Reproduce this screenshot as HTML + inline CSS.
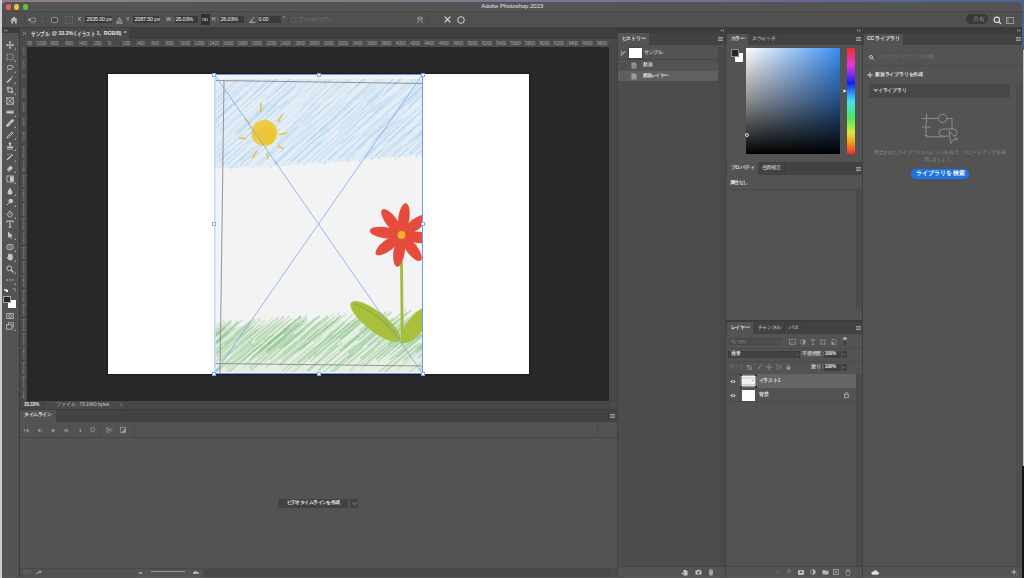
<!DOCTYPE html>
<html><head><meta charset="utf-8">
<style>
*{margin:0;padding:0;box-sizing:border-box}
html,body{width:1024px;height:578px;overflow:hidden;background:#535353;font-family:"Liberation Sans",sans-serif;color:#ddd}
.a{position:absolute}
.t{position:absolute;white-space:nowrap;line-height:1}
</style></head><body>
<!-- desktop strips -->
<div class="a" style="left:0;top:0;width:1024px;height:3px;background:linear-gradient(90deg,#8e7d88 0%,#8a7b8a 30%,#7b7592 58%,#646b96 78%,#4f6290 100%)"></div>
<div class="a" style="left:0;top:0;width:2px;height:578px;background:#cfcfcf"></div>
<div class="a" style="left:1022px;top:0;width:2px;height:50px;background:#4f6088"></div><div class="a" style="left:1022.5px;top:50px;width:1.5px;height:416px;background:#c4c4c4"></div><div class="a" style="left:1022px;top:50px;width:0.6px;height:416px;background:#4f4f4f"></div>
<!-- window -->
<div id="win" class="a" style="left:2px;top:2px;width:1020px;height:576px;background:#535353;border-radius:5px 5px 0 0;overflow:hidden">
</div>
<!-- title bar -->
<div class="a" style="left:2px;top:2px;width:1020px;height:9.5px;background:#545454;border-radius:5px 5px 0 0"></div>
<div class="a" style="left:5.5px;top:4.3px;width:5.5px;height:5.5px;border-radius:50%;background:#ec5f57"></div>
<div class="a" style="left:13.9px;top:4.3px;width:5.5px;height:5.5px;border-radius:50%;background:#f4bd3a"></div>
<div class="a" style="left:22.8px;top:4.3px;width:5.5px;height:5.5px;border-radius:50%;background:#5fc53f"></div>
<div class="t" style="left:481.2px;top:4.2px;font-size:5.95px;color:#e4e4e4">Adobe Photoshop 2023</div>
<!-- options bar -->
<div class="a" style="left:2px;top:11px;width:1020px;height:16px;background:#505050;border-top:1px solid #464646"></div>

<!-- options content -->
<div class="a" style="left:4px;top:14px;width:1px;height:11px;background:#474747"></div>
<svg class="a" style="left:10px;top:16px" width="8" height="8" viewBox="0 0 8 8"><path d="M4 0.5L0.3 4H1.3V7.5H3.1V5.3H4.9V7.5H6.7V4H7.7Z" fill="#b8b8b8"/></svg>
<div class="a" style="left:24px;top:14px;width:1px;height:11px;background:#474747"></div>
<svg class="a" style="left:27.5px;top:16.5px" width="8" height="7" viewBox="0 0 8 7"><path d="M2.5 1H7.5V4.5H2.5" fill="none" stroke="#a0a0a0" stroke-width="0.7"/><path d="M0.5 1.2L3.5 2.7L0.5 4.2Z" fill="#c0c0c0"/><path d="M1.5 6H7.5" stroke="#888" stroke-width="0.6"/></svg>
<div class="t" style="left:39.5px;top:17px;font-size:6px;color:#777">&#8964;</div>
<div class="a" style="left:45px;top:14px;width:1px;height:11px;background:#474747"></div>
<div class="a" style="left:51px;top:16.5px;width:6.5px;height:6.5px;background:#444;border:0.8px solid #8a8a8a;border-radius:1px"></div>
<div class="a" style="left:64.5px;top:16px;width:8px;height:8px;border:0.8px dotted #6a6a6a"></div>
<div class="t" style="left:77.5px;top:17.2px;font-size:5.5px;color:#c8c8c8">X :</div>
<div class="a" style="left:85px;top:16.3px;width:27px;height:6.6px;background:#3a3a3a"></div>
<div class="t" style="left:86.5px;top:17.2px;font-size:5.5px;color:#f0f0f0;font-weight:normal;letter-spacing:-0.2px">2935.00 px</div>
<svg class="a" style="left:115.5px;top:16.5px" width="7" height="7" viewBox="0 0 7 7"><path d="M3.5 0.8L6.3 6.2H0.7Z" fill="none" stroke="#bbb" stroke-width="0.8"/><circle cx="3.5" cy="4.4" r="0.7" fill="#bbb"/></svg>
<div class="t" style="left:126px;top:17.2px;font-size:5.5px;color:#c8c8c8">Y :</div>
<div class="a" style="left:133.4px;top:16.3px;width:26px;height:6.6px;background:#3a3a3a"></div>
<div class="t" style="left:134.5px;top:17.2px;font-size:5.5px;color:#f0f0f0;font-weight:normal;letter-spacing:-0.2px">2087.50 px</div>
<div class="t" style="left:166px;top:17.2px;font-size:5.5px;color:#c8c8c8">W :</div>
<div class="a" style="left:174.7px;top:16.3px;width:23px;height:6.6px;background:#3a3a3a"></div>
<div class="t" style="left:175.5px;top:17.2px;font-size:5.5px;color:#f0f0f0;font-weight:normal;letter-spacing:-0.2px">26.03%</div>
<div class="a" style="left:200.5px;top:13.9px;width:9px;height:11px;background:#313131"></div>
<svg class="a" style="left:202px;top:17.8px" width="6" height="3.5" viewBox="0 0 6 3.5"><rect x="0.4" y="0.4" width="2.6" height="2.7" rx="1.2" fill="none" stroke="#c8c8c8" stroke-width="0.75"/><rect x="3" y="0.4" width="2.6" height="2.7" rx="1.2" fill="none" stroke="#c8c8c8" stroke-width="0.75"/></svg>
<div class="t" style="left:211.5px;top:17.2px;font-size:5.5px;color:#c8c8c8">H :</div>
<div class="a" style="left:219.7px;top:16.3px;width:24px;height:6.6px;background:#3a3a3a"></div>
<div class="t" style="left:220.5px;top:17.2px;font-size:5.5px;color:#f0f0f0;font-weight:normal;letter-spacing:-0.2px">26.03%</div>
<div class="a" style="left:246px;top:14px;width:1px;height:11px;background:#474747"></div>
<svg class="a" style="left:248.5px;top:16.3px" width="7" height="7" viewBox="0 0 7 7"><path d="M0.5 6.3H6.5M0.5 6.3L5.5 1" stroke="#bbb" stroke-width="0.8" fill="none"/><path d="M3 6.3A2.6 2.6 0 0 0 2.3 4.4" stroke="#bbb" stroke-width="0.7" fill="none"/></svg>
<div class="a" style="left:257.5px;top:16.3px;width:23.5px;height:6.6px;background:#3a3a3a"></div>
<div class="t" style="left:258.5px;top:17.2px;font-size:5.5px;color:#f0f0f0;font-weight:normal;letter-spacing:-0.2px">0.00</div>
<div class="t" style="left:283px;top:16.2px;font-size:5px;color:#ccc">&#176;</div>
<div class="a" style="left:287.5px;top:14px;width:1px;height:11px;background:#474747"></div>
<div class="a" style="left:290.5px;top:17px;width:5px;height:5px;border:0.7px solid #5c5c5c;background:#4a4a4a"></div>
<div class="t" style="left:298.6px;top:17px;font-size:5.2px;color:#7b7b7b;letter-spacing:-0.9px">アンチエイリアス</div>
<svg class="a" style="left:415.5px;top:15.8px" width="8" height="8" viewBox="0 0 8 8"><path d="M1.5 1.2Q4 0 6.5 1.2V4Q4 5.2 1.5 4Z" fill="#999"/><path d="M2.5 2H5.5M2.5 3.2H5.5M4 1V4.6" stroke="#4a4a4a" stroke-width="0.5"/><path d="M1 7.2L3 5.2M7 7.2L5 5.2" stroke="#bbb" stroke-width="0.8"/></svg>
<div class="a" style="left:426.5px;top:14px;width:1px;height:11px;background:#474747"></div>
<svg class="a" style="left:443.8px;top:16.2px" width="7" height="7" viewBox="0 0 7 7"><path d="M0.7 0.7L6.3 6.3M6.3 0.7L0.7 6.3" stroke="#e2e2e2" stroke-width="1.1"/></svg>
<svg class="a" style="left:456.5px;top:15.6px" width="8" height="8" viewBox="0 0 8 8"><circle cx="4" cy="4" r="3.3" stroke="#e2e2e2" stroke-width="0.9" fill="none"/></svg>
<div class="a" style="left:966.3px;top:14.2px;width:22px;height:10.3px;background:#3a3a3a;border-radius:5.2px"></div>
<div class="t" style="left:973px;top:16.8px;font-size:5.5px;color:#8a8a8a">共有</div>
<svg class="a" style="left:992.5px;top:15.5px" width="9" height="9" viewBox="0 0 9 9"><circle cx="3.8" cy="3.8" r="2.7" stroke="#ddd" stroke-width="1.1" fill="none"/><path d="M5.8 5.8L8 8" stroke="#ddd" stroke-width="1.2"/></svg>
<svg class="a" style="left:1005.5px;top:16.5px" width="8" height="7" viewBox="0 0 8 7"><rect x="0.5" y="0.5" width="7" height="6" stroke="#aaa" stroke-width="0.8" fill="none"/><path d="M2 0.5V6.5" stroke="#aaa" stroke-width="0.6"/></svg>
<div class="t" style="left:1016.5px;top:17px;font-size:5px;color:#666">&#8964;</div>
<!-- doc tab bar -->
<div class="a" style="left:20px;top:27px;width:597px;height:12px;background:#3e3e3e"></div>
<div class="a" style="left:20px;top:28px;width:109px;height:11px;background:#4a4a4a"></div>

<svg class="a" style="left:22.3px;top:31px" width="5" height="5" viewBox="0 0 5 5"><path d="M0.8 0.8L4.2 4.2M4.2 0.8L0.8 4.2" stroke="#a0a0a0" stroke-width="0.75"/></svg>
<div class="a" style="left:6px;top:34.8px;width:8px;height:0.8px;border-top:0.8px dotted #444"></div>
<div class="t" style="left:30.7px;top:30.6px;font-size:6.4px;color:#e0e0e0;font-weight:bold;transform:scaleX(0.75);transform-origin:0 0">サンプル</div>
<div class="t" style="left:51.8px;top:31.4px;font-size:5.6px;color:#e0e0e0;font-weight:bold">@</div>
<div class="t" style="left:58.4px;top:31.4px;font-size:5.4px;color:#e0e0e0;font-weight:bold;letter-spacing:-0.1px">33.3%</div>
<div class="t" style="left:74.3px;top:31.2px;font-size:5.6px;color:#e0e0e0;font-weight:bold">(</div>
<div class="t" style="left:76.6px;top:30.6px;font-size:6.4px;color:#e0e0e0;font-weight:bold;transform:scaleX(0.75);transform-origin:0 0">イラスト</div>
<div class="t" style="left:96.4px;top:31.4px;font-size:5.4px;color:#e0e0e0;font-weight:bold">1,</div>
<div class="t" style="left:103.8px;top:31.4px;font-size:5.4px;color:#e0e0e0;font-weight:bold;letter-spacing:-0.15px">RGB/8)</div>
<div class="t" style="left:124px;top:31.2px;font-size:5.4px;color:#e0e0e0;font-weight:bold">*</div>
<!-- tools panel -->
<div class="a" style="left:2px;top:27px;width:18px;height:551px;background:#535353;border-right:1px solid #3a3a3a"></div>
<div class="a" style="left:2px;top:27px;width:17px;height:6px;background:#3c3c3c"></div>
<svg class="a" style="left:6px;top:41.3px" width="8" height="8" viewBox="0 0 8 8"><path d="M4 0.5V7.5M0.5 4H7.5" stroke="#c6c6c6" stroke-width="1"/><path d="M4 0L2.6 1.6H5.4ZM4 8L2.6 6.4H5.4ZM0 4L1.6 2.6V5.4ZM8 4L6.4 2.6V5.4Z" fill="#c6c6c6"/></svg>
<svg class="a" style="left:6px;top:52.7px" width="8" height="8" viewBox="0 0 8 8"><rect x="1" y="1.2" width="6" height="5.6" fill="none" stroke="#c6c6c6" stroke-width="0.8" stroke-dasharray="1.2 0.9"/></svg>
<svg class="a" style="left:6px;top:64.0px" width="8" height="8" viewBox="0 0 8 8"><path d="M1 3Q2 1 4.5 1.5Q7.5 1.5 7 3.5Q6 6 3 5.5Q1.5 5.2 1.5 3.5" fill="none" stroke="#c6c6c6" stroke-width="0.9"/><path d="M2 5.5L1.5 7.5" stroke="#c6c6c6" stroke-width="0.8"/></svg>
<svg class="a" style="left:6px;top:74.5px" width="8" height="8" viewBox="0 0 8 8"><path d="M1 7.5L5.5 3" stroke="#c6c6c6" stroke-width="1.6"/><path d="M6 0.5V2M7.5 2H6.5M5 1L5.6 1.6" stroke="#c6c6c6" stroke-width="0.6"/></svg>
<svg class="a" style="left:6px;top:85.7px" width="8" height="8" viewBox="0 0 8 8"><path d="M2 0.5V6H7.5M0.5 2H6V7.5" fill="none" stroke="#c6c6c6" stroke-width="1"/></svg>
<svg class="a" style="left:6px;top:96.7px" width="8" height="8" viewBox="0 0 8 8"><rect x="0.8" y="0.8" width="6.4" height="6.4" fill="none" stroke="#c6c6c6" stroke-width="0.9"/><path d="M0.8 0.8L7.2 7.2M7.2 0.8L0.8 7.2" stroke="#c6c6c6" stroke-width="0.7"/></svg>
<svg class="a" style="left:6px;top:108.0px" width="8" height="8" viewBox="0 0 8 8"><rect x="0.5" y="2.5" width="7" height="3" fill="#c6c6c6"/><path d="M1.8 2.5V3.7M3.3 2.5V3.7M4.8 2.5V3.7M6.3 2.5V3.7" stroke="#535353" stroke-width="0.5"/></svg>
<svg class="a" style="left:6px;top:119.0px" width="8" height="8" viewBox="0 0 8 8"><path d="M1.5 6.5L6.5 1.5" stroke="#c6c6c6" stroke-width="2.6" stroke-linecap="round"/><path d="M3 4L4 5M4 3L5 4" stroke="#535353" stroke-width="0.5"/></svg>
<svg class="a" style="left:6px;top:130.5px" width="8" height="8" viewBox="0 0 8 8"><path d="M1 7L1.5 5.5L6 1L7 2L2.5 6.5Z" fill="none" stroke="#c6c6c6" stroke-width="0.9"/></svg>
<svg class="a" style="left:6px;top:141.8px" width="8" height="8" viewBox="0 0 8 8"><circle cx="4" cy="1.6" r="1.3" fill="#c6c6c6"/><path d="M3.3 2.5H4.7V4.5H3.3Z" fill="#c6c6c6"/><rect x="1" y="4.5" width="6" height="1.6" fill="#c6c6c6"/><path d="M1 7.2H7" stroke="#c6c6c6" stroke-width="0.7"/></svg>
<svg class="a" style="left:6px;top:153.0px" width="8" height="8" viewBox="0 0 8 8"><path d="M1 7L5.5 2.5" stroke="#c6c6c6" stroke-width="1.3"/><path d="M5 1L7 3" stroke="#c6c6c6" stroke-width="1"/><path d="M1.2 1.2Q2.5 0.5 3 2" stroke="#c6c6c6" stroke-width="0.6" fill="none"/></svg>
<svg class="a" style="left:6px;top:164.0px" width="8" height="8" viewBox="0 0 8 8"><path d="M1 5L4.5 1.5L7 4L3.5 7.5H2Z" fill="#c6c6c6"/><path d="M1.5 4.5L4 7" stroke="#535353" stroke-width="0.6"/></svg>
<svg class="a" style="left:6px;top:175.4px" width="8" height="8" viewBox="0 0 8 8"><rect x="1" y="1" width="6.5" height="6" fill="none" stroke="#c6c6c6" stroke-width="0.8"/><rect x="4" y="1.5" width="3" height="5" fill="#c6c6c6"/></svg>
<svg class="a" style="left:6px;top:187.0px" width="8" height="8" viewBox="0 0 8 8"><path d="M4 0.8Q6.5 4 6.5 5.3A2.5 2.5 0 0 1 1.5 5.3Q1.5 4 4 0.8Z" fill="#c6c6c6"/></svg>
<svg class="a" style="left:6px;top:198.4px" width="8" height="8" viewBox="0 0 8 8"><circle cx="4.8" cy="3" r="2.3" fill="#c6c6c6"/><path d="M3.3 4.5L1 7" stroke="#c6c6c6" stroke-width="1"/></svg>
<svg class="a" style="left:6px;top:209.5px" width="8" height="8" viewBox="0 0 8 8"><path d="M4 0.8L6.8 4.2L4.8 7.2H3.2L1.2 4.2Z" fill="none" stroke="#c6c6c6" stroke-width="0.9"/><circle cx="4" cy="4" r="0.7" fill="#c6c6c6"/></svg>
<svg class="a" style="left:6px;top:220.4px" width="8" height="8" viewBox="0 0 8 8"><path d="M0.8 1H7.2V2.6M0.8 1V2.6M4 1V7.2M2.6 7.2H5.4" fill="none" stroke="#c6c6c6" stroke-width="1.1"/></svg>
<svg class="a" style="left:6px;top:231.3px" width="8" height="8" viewBox="0 0 8 8"><path d="M2 0.5V7L3.6 5.5L5 7.8L6 7.2L4.8 5H7Z" fill="#c6c6c6"/></svg>
<svg class="a" style="left:6px;top:242.6px" width="8" height="8" viewBox="0 0 8 8"><ellipse cx="4" cy="4" rx="3.3" ry="2.8" fill="none" stroke="#c6c6c6" stroke-width="0.9"/><ellipse cx="4" cy="4" rx="2.4" ry="2" fill="#7a7a7a"/></svg>
<svg class="a" style="left:6px;top:253.3px" width="8" height="8" viewBox="0 0 8 8"><path d="M2 3V1.5A0.6 0.6 0 0 1 3.2 1.5V0.9A0.6 0.6 0 0 1 4.4 0.9V1.3A0.6 0.6 0 0 1 5.6 1.5V2.3A0.6 0.6 0 0 1 6.8 2.5V5Q6.8 7.5 4.5 7.5Q2.8 7.5 1.5 5.5L0.8 4.2Q1 3.3 2 4Z" fill="#c6c6c6"/></svg>
<svg class="a" style="left:6px;top:264.8px" width="8" height="8" viewBox="0 0 8 8"><circle cx="3.3" cy="3.3" r="2.4" fill="none" stroke="#c6c6c6" stroke-width="1"/><path d="M5 5L7.5 7.5" stroke="#c6c6c6" stroke-width="1.3"/></svg>
<svg class="a" style="left:6px;top:276.3px" width="8" height="8" viewBox="0 0 8 8"><circle cx="1.3" cy="4" r="0.75" fill="#c6c6c6"/><circle cx="4" cy="4" r="0.75" fill="#c6c6c6"/><circle cx="6.7" cy="4" r="0.75" fill="#c6c6c6"/></svg>
<svg class="a" style="left:6px;top:311.7px" width="8" height="8" viewBox="0 0 8 8"><rect x="0.8" y="1.5" width="6.4" height="5" fill="none" stroke="#c6c6c6" stroke-width="0.8"/><circle cx="4" cy="4" r="1.5" fill="none" stroke="#c6c6c6" stroke-width="0.7"/></svg>
<svg class="a" style="left:6px;top:322.3px" width="8" height="8" viewBox="0 0 8 8"><rect x="2.5" y="0.8" width="5" height="4" fill="none" stroke="#c6c6c6" stroke-width="0.7"/><rect x="0.5" y="2.8" width="5.5" height="4.4" fill="#535353" stroke="#c6c6c6" stroke-width="0.8"/></svg>
<svg class="a" style="left:13.6px;top:48.3px" width="2" height="2" viewBox="0 0 2 2"><path d="M2 0V2H0Z" fill="#a0a0a0"/></svg>
<svg class="a" style="left:13.6px;top:59.7px" width="2" height="2" viewBox="0 0 2 2"><path d="M2 0V2H0Z" fill="#a0a0a0"/></svg>
<svg class="a" style="left:13.6px;top:71.0px" width="2" height="2" viewBox="0 0 2 2"><path d="M2 0V2H0Z" fill="#a0a0a0"/></svg>
<svg class="a" style="left:13.6px;top:81.5px" width="2" height="2" viewBox="0 0 2 2"><path d="M2 0V2H0Z" fill="#a0a0a0"/></svg>
<svg class="a" style="left:13.6px;top:92.7px" width="2" height="2" viewBox="0 0 2 2"><path d="M2 0V2H0Z" fill="#a0a0a0"/></svg>
<svg class="a" style="left:13.6px;top:115.0px" width="2" height="2" viewBox="0 0 2 2"><path d="M2 0V2H0Z" fill="#a0a0a0"/></svg>
<svg class="a" style="left:13.6px;top:126.0px" width="2" height="2" viewBox="0 0 2 2"><path d="M2 0V2H0Z" fill="#a0a0a0"/></svg>
<svg class="a" style="left:13.6px;top:137.5px" width="2" height="2" viewBox="0 0 2 2"><path d="M2 0V2H0Z" fill="#a0a0a0"/></svg>
<svg class="a" style="left:13.6px;top:148.8px" width="2" height="2" viewBox="0 0 2 2"><path d="M2 0V2H0Z" fill="#a0a0a0"/></svg>
<svg class="a" style="left:13.6px;top:160.0px" width="2" height="2" viewBox="0 0 2 2"><path d="M2 0V2H0Z" fill="#a0a0a0"/></svg>
<svg class="a" style="left:13.6px;top:171.0px" width="2" height="2" viewBox="0 0 2 2"><path d="M2 0V2H0Z" fill="#a0a0a0"/></svg>
<svg class="a" style="left:13.6px;top:182.4px" width="2" height="2" viewBox="0 0 2 2"><path d="M2 0V2H0Z" fill="#a0a0a0"/></svg>
<svg class="a" style="left:13.6px;top:194.0px" width="2" height="2" viewBox="0 0 2 2"><path d="M2 0V2H0Z" fill="#a0a0a0"/></svg>
<svg class="a" style="left:13.6px;top:205.4px" width="2" height="2" viewBox="0 0 2 2"><path d="M2 0V2H0Z" fill="#a0a0a0"/></svg>
<svg class="a" style="left:13.6px;top:216.5px" width="2" height="2" viewBox="0 0 2 2"><path d="M2 0V2H0Z" fill="#a0a0a0"/></svg>
<svg class="a" style="left:13.6px;top:238.3px" width="2" height="2" viewBox="0 0 2 2"><path d="M2 0V2H0Z" fill="#a0a0a0"/></svg>
<svg class="a" style="left:13.6px;top:249.6px" width="2" height="2" viewBox="0 0 2 2"><path d="M2 0V2H0Z" fill="#a0a0a0"/></svg>
<svg class="a" style="left:13.6px;top:260.3px" width="2" height="2" viewBox="0 0 2 2"><path d="M2 0V2H0Z" fill="#a0a0a0"/></svg>
<svg class="a" style="left:13.6px;top:271.8px" width="2" height="2" viewBox="0 0 2 2"><path d="M2 0V2H0Z" fill="#a0a0a0"/></svg>
<svg class="a" style="left:13.6px;top:283.3px" width="2" height="2" viewBox="0 0 2 2"><path d="M2 0V2H0Z" fill="#a0a0a0"/></svg>
<svg class="a" style="left:13.6px;top:329.3px" width="2" height="2" viewBox="0 0 2 2"><path d="M2 0V2H0Z" fill="#a0a0a0"/></svg>
<div class="a" style="left:4.2px;top:288.5px;width:2.6px;height:2.6px;background:#222;border:0.5px solid #ccc"></div><div class="a" style="left:5.5px;top:289.8px;width:2.6px;height:2.6px;background:#fff"></div>
<svg class="a" style="left:11.5px;top:288px" width="4" height="4" viewBox="0 0 4 4"><path d="M0.5 0.8H3.2V3.5" fill="none" stroke="#c6c6c6" stroke-width="0.6"/></svg>
<div class="a" style="left:7.9px;top:299.5px;width:8.2px;height:8px;background:#fff"></div>
<div class="a" style="left:3.3px;top:295.6px;width:8.2px;height:7.8px;background:#262626;border:0.8px solid #a8a8a8"></div>
<svg class="a" style="left:4px;top:28.8px" width="4" height="3" viewBox="0 0 4 3"><path d="M0.2 0.2L1.8 1.5L0.2 2.8ZM2.2 0.2L3.8 1.5L2.2 2.8Z" fill="#9a9a9a"/></svg>
<!-- rulers -->
<div class="a" style="left:20px;top:39px;width:597px;height:8px;background:#494949"></div>
<div class="a" style="left:20px;top:39px;width:7px;height:362px;background:#494949"></div>
<div class="a" style="left:21.4px;top:40px;width:0.6px;height:6.5px;background:#575757"></div>
<div class="a" style="left:28.6px;top:44.5px;width:0.6px;height:2px;background:#575757"></div>
<div class="a" style="left:32.2px;top:45.3px;width:0.6px;height:1.2px;background:#575757"></div>
<div class="t" style="left:22.4px;top:41.6px;font-size:4.6px;color:#a8a8a8;letter-spacing:-0.15px">1200</div>
<div class="a" style="left:35.8px;top:40px;width:0.6px;height:6.5px;background:#575757"></div>
<div class="a" style="left:39.3px;top:45.3px;width:0.6px;height:1.2px;background:#575757"></div>
<div class="a" style="left:42.9px;top:44.5px;width:0.6px;height:2px;background:#575757"></div>
<div class="a" style="left:46.5px;top:45.3px;width:0.6px;height:1.2px;background:#575757"></div>
<div class="t" style="left:36.8px;top:41.6px;font-size:4.6px;color:#a8a8a8;letter-spacing:-0.15px">1000</div>
<div class="a" style="left:50.1px;top:40px;width:0.6px;height:6.5px;background:#575757"></div>
<div class="a" style="left:53.7px;top:45.3px;width:0.6px;height:1.2px;background:#575757"></div>
<div class="a" style="left:57.3px;top:44.5px;width:0.6px;height:2px;background:#575757"></div>
<div class="a" style="left:60.9px;top:45.3px;width:0.6px;height:1.2px;background:#575757"></div>
<div class="t" style="left:51.1px;top:41.6px;font-size:4.6px;color:#a8a8a8;letter-spacing:-0.15px">800</div>
<div class="a" style="left:64.5px;top:40px;width:0.6px;height:6.5px;background:#575757"></div>
<div class="a" style="left:68.1px;top:45.3px;width:0.6px;height:1.2px;background:#575757"></div>
<div class="a" style="left:71.7px;top:44.5px;width:0.6px;height:2px;background:#575757"></div>
<div class="a" style="left:75.3px;top:45.3px;width:0.6px;height:1.2px;background:#575757"></div>
<div class="t" style="left:65.5px;top:41.6px;font-size:4.6px;color:#a8a8a8;letter-spacing:-0.15px">600</div>
<div class="a" style="left:78.9px;top:40px;width:0.6px;height:6.5px;background:#575757"></div>
<div class="a" style="left:82.5px;top:45.3px;width:0.6px;height:1.2px;background:#575757"></div>
<div class="a" style="left:86.0px;top:44.5px;width:0.6px;height:2px;background:#575757"></div>
<div class="a" style="left:89.6px;top:45.3px;width:0.6px;height:1.2px;background:#575757"></div>
<div class="t" style="left:79.9px;top:41.6px;font-size:4.6px;color:#a8a8a8;letter-spacing:-0.15px">400</div>
<div class="a" style="left:93.2px;top:40px;width:0.6px;height:6.5px;background:#575757"></div>
<div class="a" style="left:96.8px;top:45.3px;width:0.6px;height:1.2px;background:#575757"></div>
<div class="a" style="left:100.4px;top:44.5px;width:0.6px;height:2px;background:#575757"></div>
<div class="a" style="left:104.0px;top:45.3px;width:0.6px;height:1.2px;background:#575757"></div>
<div class="t" style="left:94.2px;top:41.6px;font-size:4.6px;color:#a8a8a8;letter-spacing:-0.15px">200</div>
<div class="a" style="left:107.6px;top:40px;width:0.6px;height:6.5px;background:#575757"></div>
<div class="a" style="left:111.2px;top:45.3px;width:0.6px;height:1.2px;background:#575757"></div>
<div class="a" style="left:114.8px;top:44.5px;width:0.6px;height:2px;background:#575757"></div>
<div class="a" style="left:118.4px;top:45.3px;width:0.6px;height:1.2px;background:#575757"></div>
<div class="t" style="left:108.6px;top:41.6px;font-size:4.6px;color:#a8a8a8;letter-spacing:-0.15px">0</div>
<div class="a" style="left:122.0px;top:40px;width:0.6px;height:6.5px;background:#575757"></div>
<div class="a" style="left:125.6px;top:45.3px;width:0.6px;height:1.2px;background:#575757"></div>
<div class="a" style="left:129.2px;top:44.5px;width:0.6px;height:2px;background:#575757"></div>
<div class="a" style="left:132.7px;top:45.3px;width:0.6px;height:1.2px;background:#575757"></div>
<div class="t" style="left:123.0px;top:41.6px;font-size:4.6px;color:#a8a8a8;letter-spacing:-0.15px">200</div>
<div class="a" style="left:136.3px;top:40px;width:0.6px;height:6.5px;background:#575757"></div>
<div class="a" style="left:139.9px;top:45.3px;width:0.6px;height:1.2px;background:#575757"></div>
<div class="a" style="left:143.5px;top:44.5px;width:0.6px;height:2px;background:#575757"></div>
<div class="a" style="left:147.1px;top:45.3px;width:0.6px;height:1.2px;background:#575757"></div>
<div class="t" style="left:137.3px;top:41.6px;font-size:4.6px;color:#a8a8a8;letter-spacing:-0.15px">400</div>
<div class="a" style="left:150.7px;top:40px;width:0.6px;height:6.5px;background:#575757"></div>
<div class="a" style="left:154.3px;top:45.3px;width:0.6px;height:1.2px;background:#575757"></div>
<div class="a" style="left:157.9px;top:44.5px;width:0.6px;height:2px;background:#575757"></div>
<div class="a" style="left:161.5px;top:45.3px;width:0.6px;height:1.2px;background:#575757"></div>
<div class="t" style="left:151.7px;top:41.6px;font-size:4.6px;color:#a8a8a8;letter-spacing:-0.15px">600</div>
<div class="a" style="left:165.1px;top:40px;width:0.6px;height:6.5px;background:#575757"></div>
<div class="a" style="left:168.7px;top:45.3px;width:0.6px;height:1.2px;background:#575757"></div>
<div class="a" style="left:172.3px;top:44.5px;width:0.6px;height:2px;background:#575757"></div>
<div class="a" style="left:175.9px;top:45.3px;width:0.6px;height:1.2px;background:#575757"></div>
<div class="t" style="left:166.1px;top:41.6px;font-size:4.6px;color:#a8a8a8;letter-spacing:-0.15px">800</div>
<div class="a" style="left:179.4px;top:40px;width:0.6px;height:6.5px;background:#575757"></div>
<div class="a" style="left:183.0px;top:45.3px;width:0.6px;height:1.2px;background:#575757"></div>
<div class="a" style="left:186.6px;top:44.5px;width:0.6px;height:2px;background:#575757"></div>
<div class="a" style="left:190.2px;top:45.3px;width:0.6px;height:1.2px;background:#575757"></div>
<div class="t" style="left:180.4px;top:41.6px;font-size:4.6px;color:#a8a8a8;letter-spacing:-0.15px">1000</div>
<div class="a" style="left:193.8px;top:40px;width:0.6px;height:6.5px;background:#575757"></div>
<div class="a" style="left:197.4px;top:45.3px;width:0.6px;height:1.2px;background:#575757"></div>
<div class="a" style="left:201.0px;top:44.5px;width:0.6px;height:2px;background:#575757"></div>
<div class="a" style="left:204.6px;top:45.3px;width:0.6px;height:1.2px;background:#575757"></div>
<div class="t" style="left:194.8px;top:41.6px;font-size:4.6px;color:#a8a8a8;letter-spacing:-0.15px">1200</div>
<div class="a" style="left:208.2px;top:40px;width:0.6px;height:6.5px;background:#575757"></div>
<div class="a" style="left:211.8px;top:45.3px;width:0.6px;height:1.2px;background:#575757"></div>
<div class="a" style="left:215.4px;top:44.5px;width:0.6px;height:2px;background:#575757"></div>
<div class="a" style="left:219.0px;top:45.3px;width:0.6px;height:1.2px;background:#575757"></div>
<div class="t" style="left:209.2px;top:41.6px;font-size:4.6px;color:#a8a8a8;letter-spacing:-0.15px">1400</div>
<div class="a" style="left:222.6px;top:40px;width:0.6px;height:6.5px;background:#575757"></div>
<div class="a" style="left:226.2px;top:45.3px;width:0.6px;height:1.2px;background:#575757"></div>
<div class="a" style="left:229.7px;top:44.5px;width:0.6px;height:2px;background:#575757"></div>
<div class="a" style="left:233.3px;top:45.3px;width:0.6px;height:1.2px;background:#575757"></div>
<div class="t" style="left:223.6px;top:41.6px;font-size:4.6px;color:#a8a8a8;letter-spacing:-0.15px">1600</div>
<div class="a" style="left:236.9px;top:40px;width:0.6px;height:6.5px;background:#575757"></div>
<div class="a" style="left:240.5px;top:45.3px;width:0.6px;height:1.2px;background:#575757"></div>
<div class="a" style="left:244.1px;top:44.5px;width:0.6px;height:2px;background:#575757"></div>
<div class="a" style="left:247.7px;top:45.3px;width:0.6px;height:1.2px;background:#575757"></div>
<div class="t" style="left:237.9px;top:41.6px;font-size:4.6px;color:#a8a8a8;letter-spacing:-0.15px">1800</div>
<div class="a" style="left:251.3px;top:40px;width:0.6px;height:6.5px;background:#575757"></div>
<div class="a" style="left:254.9px;top:45.3px;width:0.6px;height:1.2px;background:#575757"></div>
<div class="a" style="left:258.5px;top:44.5px;width:0.6px;height:2px;background:#575757"></div>
<div class="a" style="left:262.1px;top:45.3px;width:0.6px;height:1.2px;background:#575757"></div>
<div class="t" style="left:252.3px;top:41.6px;font-size:4.6px;color:#a8a8a8;letter-spacing:-0.15px">2000</div>
<div class="a" style="left:265.7px;top:40px;width:0.6px;height:6.5px;background:#575757"></div>
<div class="a" style="left:269.3px;top:45.3px;width:0.6px;height:1.2px;background:#575757"></div>
<div class="a" style="left:272.9px;top:44.5px;width:0.6px;height:2px;background:#575757"></div>
<div class="a" style="left:276.4px;top:45.3px;width:0.6px;height:1.2px;background:#575757"></div>
<div class="t" style="left:266.7px;top:41.6px;font-size:4.6px;color:#a8a8a8;letter-spacing:-0.15px">2200</div>
<div class="a" style="left:280.0px;top:40px;width:0.6px;height:6.5px;background:#575757"></div>
<div class="a" style="left:283.6px;top:45.3px;width:0.6px;height:1.2px;background:#575757"></div>
<div class="a" style="left:287.2px;top:44.5px;width:0.6px;height:2px;background:#575757"></div>
<div class="a" style="left:290.8px;top:45.3px;width:0.6px;height:1.2px;background:#575757"></div>
<div class="t" style="left:281.0px;top:41.6px;font-size:4.6px;color:#a8a8a8;letter-spacing:-0.15px">2400</div>
<div class="a" style="left:294.4px;top:40px;width:0.6px;height:6.5px;background:#575757"></div>
<div class="a" style="left:298.0px;top:45.3px;width:0.6px;height:1.2px;background:#575757"></div>
<div class="a" style="left:301.6px;top:44.5px;width:0.6px;height:2px;background:#575757"></div>
<div class="a" style="left:305.2px;top:45.3px;width:0.6px;height:1.2px;background:#575757"></div>
<div class="t" style="left:295.4px;top:41.6px;font-size:4.6px;color:#a8a8a8;letter-spacing:-0.15px">2600</div>
<div class="a" style="left:308.8px;top:40px;width:0.6px;height:6.5px;background:#575757"></div>
<div class="a" style="left:312.4px;top:45.3px;width:0.6px;height:1.2px;background:#575757"></div>
<div class="a" style="left:316.0px;top:44.5px;width:0.6px;height:2px;background:#575757"></div>
<div class="a" style="left:319.6px;top:45.3px;width:0.6px;height:1.2px;background:#575757"></div>
<div class="t" style="left:309.8px;top:41.6px;font-size:4.6px;color:#a8a8a8;letter-spacing:-0.15px">2800</div>
<div class="a" style="left:323.1px;top:40px;width:0.6px;height:6.5px;background:#575757"></div>
<div class="a" style="left:326.7px;top:45.3px;width:0.6px;height:1.2px;background:#575757"></div>
<div class="a" style="left:330.3px;top:44.5px;width:0.6px;height:2px;background:#575757"></div>
<div class="a" style="left:333.9px;top:45.3px;width:0.6px;height:1.2px;background:#575757"></div>
<div class="t" style="left:324.1px;top:41.6px;font-size:4.6px;color:#a8a8a8;letter-spacing:-0.15px">3000</div>
<div class="a" style="left:337.5px;top:40px;width:0.6px;height:6.5px;background:#575757"></div>
<div class="a" style="left:341.1px;top:45.3px;width:0.6px;height:1.2px;background:#575757"></div>
<div class="a" style="left:344.7px;top:44.5px;width:0.6px;height:2px;background:#575757"></div>
<div class="a" style="left:348.3px;top:45.3px;width:0.6px;height:1.2px;background:#575757"></div>
<div class="t" style="left:338.5px;top:41.6px;font-size:4.6px;color:#a8a8a8;letter-spacing:-0.15px">3200</div>
<div class="a" style="left:351.9px;top:40px;width:0.6px;height:6.5px;background:#575757"></div>
<div class="a" style="left:355.5px;top:45.3px;width:0.6px;height:1.2px;background:#575757"></div>
<div class="a" style="left:359.1px;top:44.5px;width:0.6px;height:2px;background:#575757"></div>
<div class="a" style="left:362.7px;top:45.3px;width:0.6px;height:1.2px;background:#575757"></div>
<div class="t" style="left:352.9px;top:41.6px;font-size:4.6px;color:#a8a8a8;letter-spacing:-0.15px">3400</div>
<div class="a" style="left:366.3px;top:40px;width:0.6px;height:6.5px;background:#575757"></div>
<div class="a" style="left:369.9px;top:45.3px;width:0.6px;height:1.2px;background:#575757"></div>
<div class="a" style="left:373.4px;top:44.5px;width:0.6px;height:2px;background:#575757"></div>
<div class="a" style="left:377.0px;top:45.3px;width:0.6px;height:1.2px;background:#575757"></div>
<div class="t" style="left:367.3px;top:41.6px;font-size:4.6px;color:#a8a8a8;letter-spacing:-0.15px">3600</div>
<div class="a" style="left:380.6px;top:40px;width:0.6px;height:6.5px;background:#575757"></div>
<div class="a" style="left:384.2px;top:45.3px;width:0.6px;height:1.2px;background:#575757"></div>
<div class="a" style="left:387.8px;top:44.5px;width:0.6px;height:2px;background:#575757"></div>
<div class="a" style="left:391.4px;top:45.3px;width:0.6px;height:1.2px;background:#575757"></div>
<div class="t" style="left:381.6px;top:41.6px;font-size:4.6px;color:#a8a8a8;letter-spacing:-0.15px">3800</div>
<div class="a" style="left:395.0px;top:40px;width:0.6px;height:6.5px;background:#575757"></div>
<div class="a" style="left:398.6px;top:45.3px;width:0.6px;height:1.2px;background:#575757"></div>
<div class="a" style="left:402.2px;top:44.5px;width:0.6px;height:2px;background:#575757"></div>
<div class="a" style="left:405.8px;top:45.3px;width:0.6px;height:1.2px;background:#575757"></div>
<div class="t" style="left:396.0px;top:41.6px;font-size:4.6px;color:#a8a8a8;letter-spacing:-0.15px">4000</div>
<div class="a" style="left:409.4px;top:40px;width:0.6px;height:6.5px;background:#575757"></div>
<div class="a" style="left:413.0px;top:45.3px;width:0.6px;height:1.2px;background:#575757"></div>
<div class="a" style="left:416.6px;top:44.5px;width:0.6px;height:2px;background:#575757"></div>
<div class="a" style="left:420.1px;top:45.3px;width:0.6px;height:1.2px;background:#575757"></div>
<div class="t" style="left:410.4px;top:41.6px;font-size:4.6px;color:#a8a8a8;letter-spacing:-0.15px">4200</div>
<div class="a" style="left:423.7px;top:40px;width:0.6px;height:6.5px;background:#575757"></div>
<div class="a" style="left:427.3px;top:45.3px;width:0.6px;height:1.2px;background:#575757"></div>
<div class="a" style="left:430.9px;top:44.5px;width:0.6px;height:2px;background:#575757"></div>
<div class="a" style="left:434.5px;top:45.3px;width:0.6px;height:1.2px;background:#575757"></div>
<div class="t" style="left:424.7px;top:41.6px;font-size:4.6px;color:#a8a8a8;letter-spacing:-0.15px">4400</div>
<div class="a" style="left:438.1px;top:40px;width:0.6px;height:6.5px;background:#575757"></div>
<div class="a" style="left:441.7px;top:45.3px;width:0.6px;height:1.2px;background:#575757"></div>
<div class="a" style="left:445.3px;top:44.5px;width:0.6px;height:2px;background:#575757"></div>
<div class="a" style="left:448.9px;top:45.3px;width:0.6px;height:1.2px;background:#575757"></div>
<div class="t" style="left:439.1px;top:41.6px;font-size:4.6px;color:#a8a8a8;letter-spacing:-0.15px">4600</div>
<div class="a" style="left:452.5px;top:40px;width:0.6px;height:6.5px;background:#575757"></div>
<div class="a" style="left:456.1px;top:45.3px;width:0.6px;height:1.2px;background:#575757"></div>
<div class="a" style="left:459.7px;top:44.5px;width:0.6px;height:2px;background:#575757"></div>
<div class="a" style="left:463.3px;top:45.3px;width:0.6px;height:1.2px;background:#575757"></div>
<div class="t" style="left:453.5px;top:41.6px;font-size:4.6px;color:#a8a8a8;letter-spacing:-0.15px">4800</div>
<div class="a" style="left:466.9px;top:40px;width:0.6px;height:6.5px;background:#575757"></div>
<div class="a" style="left:470.4px;top:45.3px;width:0.6px;height:1.2px;background:#575757"></div>
<div class="a" style="left:474.0px;top:44.5px;width:0.6px;height:2px;background:#575757"></div>
<div class="a" style="left:477.6px;top:45.3px;width:0.6px;height:1.2px;background:#575757"></div>
<div class="t" style="left:467.9px;top:41.6px;font-size:4.6px;color:#a8a8a8;letter-spacing:-0.15px">5000</div>
<div class="a" style="left:481.2px;top:40px;width:0.6px;height:6.5px;background:#575757"></div>
<div class="a" style="left:484.8px;top:45.3px;width:0.6px;height:1.2px;background:#575757"></div>
<div class="a" style="left:488.4px;top:44.5px;width:0.6px;height:2px;background:#575757"></div>
<div class="a" style="left:492.0px;top:45.3px;width:0.6px;height:1.2px;background:#575757"></div>
<div class="t" style="left:482.2px;top:41.6px;font-size:4.6px;color:#a8a8a8;letter-spacing:-0.15px">5200</div>
<div class="a" style="left:495.6px;top:40px;width:0.6px;height:6.5px;background:#575757"></div>
<div class="a" style="left:499.2px;top:45.3px;width:0.6px;height:1.2px;background:#575757"></div>
<div class="a" style="left:502.8px;top:44.5px;width:0.6px;height:2px;background:#575757"></div>
<div class="a" style="left:506.4px;top:45.3px;width:0.6px;height:1.2px;background:#575757"></div>
<div class="t" style="left:496.6px;top:41.6px;font-size:4.6px;color:#a8a8a8;letter-spacing:-0.15px">5400</div>
<div class="a" style="left:510.0px;top:40px;width:0.6px;height:6.5px;background:#575757"></div>
<div class="a" style="left:513.6px;top:45.3px;width:0.6px;height:1.2px;background:#575757"></div>
<div class="a" style="left:517.1px;top:44.5px;width:0.6px;height:2px;background:#575757"></div>
<div class="a" style="left:520.7px;top:45.3px;width:0.6px;height:1.2px;background:#575757"></div>
<div class="t" style="left:511.0px;top:41.6px;font-size:4.6px;color:#a8a8a8;letter-spacing:-0.15px">5600</div>
<div class="a" style="left:524.3px;top:40px;width:0.6px;height:6.5px;background:#575757"></div>
<div class="a" style="left:527.9px;top:45.3px;width:0.6px;height:1.2px;background:#575757"></div>
<div class="a" style="left:531.5px;top:44.5px;width:0.6px;height:2px;background:#575757"></div>
<div class="a" style="left:535.1px;top:45.3px;width:0.6px;height:1.2px;background:#575757"></div>
<div class="t" style="left:525.3px;top:41.6px;font-size:4.6px;color:#a8a8a8;letter-spacing:-0.15px">5800</div>
<div class="a" style="left:538.7px;top:40px;width:0.6px;height:6.5px;background:#575757"></div>
<div class="a" style="left:542.3px;top:45.3px;width:0.6px;height:1.2px;background:#575757"></div>
<div class="a" style="left:545.9px;top:44.5px;width:0.6px;height:2px;background:#575757"></div>
<div class="a" style="left:549.5px;top:45.3px;width:0.6px;height:1.2px;background:#575757"></div>
<div class="t" style="left:539.7px;top:41.6px;font-size:4.6px;color:#a8a8a8;letter-spacing:-0.15px">6000</div>
<div class="a" style="left:553.1px;top:40px;width:0.6px;height:6.5px;background:#575757"></div>
<div class="a" style="left:556.7px;top:45.3px;width:0.6px;height:1.2px;background:#575757"></div>
<div class="a" style="left:560.3px;top:44.5px;width:0.6px;height:2px;background:#575757"></div>
<div class="a" style="left:563.8px;top:45.3px;width:0.6px;height:1.2px;background:#575757"></div>
<div class="t" style="left:554.1px;top:41.6px;font-size:4.6px;color:#a8a8a8;letter-spacing:-0.15px">6200</div>
<div class="a" style="left:567.4px;top:40px;width:0.6px;height:6.5px;background:#575757"></div>
<div class="a" style="left:571.0px;top:45.3px;width:0.6px;height:1.2px;background:#575757"></div>
<div class="a" style="left:574.6px;top:44.5px;width:0.6px;height:2px;background:#575757"></div>
<div class="a" style="left:578.2px;top:45.3px;width:0.6px;height:1.2px;background:#575757"></div>
<div class="t" style="left:568.4px;top:41.6px;font-size:4.6px;color:#a8a8a8;letter-spacing:-0.15px">6400</div>
<div class="a" style="left:581.8px;top:40px;width:0.6px;height:6.5px;background:#575757"></div>
<div class="a" style="left:585.4px;top:45.3px;width:0.6px;height:1.2px;background:#575757"></div>
<div class="a" style="left:589.0px;top:44.5px;width:0.6px;height:2px;background:#575757"></div>
<div class="a" style="left:592.6px;top:45.3px;width:0.6px;height:1.2px;background:#575757"></div>
<div class="t" style="left:582.8px;top:41.6px;font-size:4.6px;color:#a8a8a8;letter-spacing:-0.15px">6600</div>
<div class="a" style="left:596.2px;top:40px;width:0.6px;height:6.5px;background:#575757"></div>
<div class="a" style="left:599.8px;top:45.3px;width:0.6px;height:1.2px;background:#575757"></div>
<div class="a" style="left:603.4px;top:44.5px;width:0.6px;height:2px;background:#575757"></div>
<div class="a" style="left:607.0px;top:45.3px;width:0.6px;height:1.2px;background:#575757"></div>
<div class="t" style="left:597.2px;top:41.6px;font-size:4.6px;color:#a8a8a8;letter-spacing:-0.15px">6800</div>
<div class="t" style="left:22.6px;top:46.8px;font-size:3.7px;color:#9c9c9c">4</div>
<div class="t" style="left:22.6px;top:49.7px;font-size:3.7px;color:#9c9c9c">0</div>
<div class="t" style="left:22.6px;top:52.6px;font-size:3.7px;color:#9c9c9c">0</div>
<div class="a" style="left:20.5px;top:59.8px;width:6.5px;height:0.6px;background:#575757"></div>
<div class="t" style="left:22.6px;top:61.1px;font-size:3.7px;color:#9c9c9c">2</div>
<div class="t" style="left:22.6px;top:64.0px;font-size:3.7px;color:#9c9c9c">0</div>
<div class="t" style="left:22.6px;top:66.9px;font-size:3.7px;color:#9c9c9c">0</div>
<div class="a" style="left:20.5px;top:74.2px;width:6.5px;height:0.6px;background:#575757"></div>
<div class="t" style="left:22.6px;top:75.5px;font-size:3.7px;color:#9c9c9c">0</div>
<div class="a" style="left:20.5px;top:88.6px;width:6.5px;height:0.6px;background:#575757"></div>
<div class="t" style="left:22.6px;top:89.9px;font-size:3.7px;color:#9c9c9c">2</div>
<div class="t" style="left:22.6px;top:92.8px;font-size:3.7px;color:#9c9c9c">0</div>
<div class="t" style="left:22.6px;top:95.7px;font-size:3.7px;color:#9c9c9c">0</div>
<div class="a" style="left:20.5px;top:102.9px;width:6.5px;height:0.6px;background:#575757"></div>
<div class="t" style="left:22.6px;top:104.2px;font-size:3.7px;color:#9c9c9c">4</div>
<div class="t" style="left:22.6px;top:107.1px;font-size:3.7px;color:#9c9c9c">0</div>
<div class="t" style="left:22.6px;top:110.0px;font-size:3.7px;color:#9c9c9c">0</div>
<div class="a" style="left:20.5px;top:117.3px;width:6.5px;height:0.6px;background:#575757"></div>
<div class="t" style="left:22.6px;top:118.6px;font-size:3.7px;color:#9c9c9c">6</div>
<div class="t" style="left:22.6px;top:121.5px;font-size:3.7px;color:#9c9c9c">0</div>
<div class="t" style="left:22.6px;top:124.4px;font-size:3.7px;color:#9c9c9c">0</div>
<div class="a" style="left:20.5px;top:131.7px;width:6.5px;height:0.6px;background:#575757"></div>
<div class="t" style="left:22.6px;top:133.0px;font-size:3.7px;color:#9c9c9c">8</div>
<div class="t" style="left:22.6px;top:135.9px;font-size:3.7px;color:#9c9c9c">0</div>
<div class="t" style="left:22.6px;top:138.8px;font-size:3.7px;color:#9c9c9c">0</div>
<div class="a" style="left:20.5px;top:146.1px;width:6.5px;height:0.6px;background:#575757"></div>
<div class="t" style="left:22.6px;top:147.4px;font-size:3.7px;color:#9c9c9c">1</div>
<div class="t" style="left:22.6px;top:150.3px;font-size:3.7px;color:#9c9c9c">0</div>
<div class="t" style="left:22.6px;top:153.2px;font-size:3.7px;color:#9c9c9c">0</div>
<div class="t" style="left:22.6px;top:156.1px;font-size:3.7px;color:#9c9c9c">0</div>
<div class="a" style="left:20.5px;top:160.4px;width:6.5px;height:0.6px;background:#575757"></div>
<div class="t" style="left:22.6px;top:161.7px;font-size:3.7px;color:#9c9c9c">1</div>
<div class="t" style="left:22.6px;top:164.6px;font-size:3.7px;color:#9c9c9c">2</div>
<div class="t" style="left:22.6px;top:167.5px;font-size:3.7px;color:#9c9c9c">0</div>
<div class="t" style="left:22.6px;top:170.4px;font-size:3.7px;color:#9c9c9c">0</div>
<div class="a" style="left:20.5px;top:174.8px;width:6.5px;height:0.6px;background:#575757"></div>
<div class="t" style="left:22.6px;top:176.1px;font-size:3.7px;color:#9c9c9c">1</div>
<div class="t" style="left:22.6px;top:179.0px;font-size:3.7px;color:#9c9c9c">4</div>
<div class="t" style="left:22.6px;top:181.9px;font-size:3.7px;color:#9c9c9c">0</div>
<div class="t" style="left:22.6px;top:184.8px;font-size:3.7px;color:#9c9c9c">0</div>
<div class="a" style="left:20.5px;top:189.2px;width:6.5px;height:0.6px;background:#575757"></div>
<div class="t" style="left:22.6px;top:190.5px;font-size:3.7px;color:#9c9c9c">1</div>
<div class="t" style="left:22.6px;top:193.4px;font-size:3.7px;color:#9c9c9c">6</div>
<div class="t" style="left:22.6px;top:196.3px;font-size:3.7px;color:#9c9c9c">0</div>
<div class="t" style="left:22.6px;top:199.2px;font-size:3.7px;color:#9c9c9c">0</div>
<div class="a" style="left:20.5px;top:203.5px;width:6.5px;height:0.6px;background:#575757"></div>
<div class="t" style="left:22.6px;top:204.8px;font-size:3.7px;color:#9c9c9c">1</div>
<div class="t" style="left:22.6px;top:207.7px;font-size:3.7px;color:#9c9c9c">8</div>
<div class="t" style="left:22.6px;top:210.6px;font-size:3.7px;color:#9c9c9c">0</div>
<div class="t" style="left:22.6px;top:213.5px;font-size:3.7px;color:#9c9c9c">0</div>
<div class="a" style="left:20.5px;top:217.9px;width:6.5px;height:0.6px;background:#575757"></div>
<div class="t" style="left:22.6px;top:219.2px;font-size:3.7px;color:#9c9c9c">2</div>
<div class="t" style="left:22.6px;top:222.1px;font-size:3.7px;color:#9c9c9c">0</div>
<div class="t" style="left:22.6px;top:225.0px;font-size:3.7px;color:#9c9c9c">0</div>
<div class="t" style="left:22.6px;top:227.9px;font-size:3.7px;color:#9c9c9c">0</div>
<div class="a" style="left:20.5px;top:232.3px;width:6.5px;height:0.6px;background:#575757"></div>
<div class="t" style="left:22.6px;top:233.6px;font-size:3.7px;color:#9c9c9c">2</div>
<div class="t" style="left:22.6px;top:236.5px;font-size:3.7px;color:#9c9c9c">2</div>
<div class="t" style="left:22.6px;top:239.4px;font-size:3.7px;color:#9c9c9c">0</div>
<div class="t" style="left:22.6px;top:242.3px;font-size:3.7px;color:#9c9c9c">0</div>
<div class="a" style="left:20.5px;top:246.6px;width:6.5px;height:0.6px;background:#575757"></div>
<div class="t" style="left:22.6px;top:247.9px;font-size:3.7px;color:#9c9c9c">2</div>
<div class="t" style="left:22.6px;top:250.8px;font-size:3.7px;color:#9c9c9c">4</div>
<div class="t" style="left:22.6px;top:253.7px;font-size:3.7px;color:#9c9c9c">0</div>
<div class="t" style="left:22.6px;top:256.6px;font-size:3.7px;color:#9c9c9c">0</div>
<div class="a" style="left:20.5px;top:261.0px;width:6.5px;height:0.6px;background:#575757"></div>
<div class="t" style="left:22.6px;top:262.3px;font-size:3.7px;color:#9c9c9c">2</div>
<div class="t" style="left:22.6px;top:265.2px;font-size:3.7px;color:#9c9c9c">6</div>
<div class="t" style="left:22.6px;top:268.1px;font-size:3.7px;color:#9c9c9c">0</div>
<div class="t" style="left:22.6px;top:271.0px;font-size:3.7px;color:#9c9c9c">0</div>
<div class="a" style="left:20.5px;top:275.4px;width:6.5px;height:0.6px;background:#575757"></div>
<div class="t" style="left:22.6px;top:276.7px;font-size:3.7px;color:#9c9c9c">2</div>
<div class="t" style="left:22.6px;top:279.6px;font-size:3.7px;color:#9c9c9c">8</div>
<div class="t" style="left:22.6px;top:282.5px;font-size:3.7px;color:#9c9c9c">0</div>
<div class="t" style="left:22.6px;top:285.4px;font-size:3.7px;color:#9c9c9c">0</div>
<div class="a" style="left:20.5px;top:289.8px;width:6.5px;height:0.6px;background:#575757"></div>
<div class="t" style="left:22.6px;top:291.1px;font-size:3.7px;color:#9c9c9c">3</div>
<div class="t" style="left:22.6px;top:293.9px;font-size:3.7px;color:#9c9c9c">0</div>
<div class="t" style="left:22.6px;top:296.9px;font-size:3.7px;color:#9c9c9c">0</div>
<div class="t" style="left:22.6px;top:299.8px;font-size:3.7px;color:#9c9c9c">0</div>
<div class="a" style="left:20.5px;top:304.1px;width:6.5px;height:0.6px;background:#575757"></div>
<div class="t" style="left:22.6px;top:305.4px;font-size:3.7px;color:#9c9c9c">3</div>
<div class="t" style="left:22.6px;top:308.3px;font-size:3.7px;color:#9c9c9c">2</div>
<div class="t" style="left:22.6px;top:311.2px;font-size:3.7px;color:#9c9c9c">0</div>
<div class="t" style="left:22.6px;top:314.1px;font-size:3.7px;color:#9c9c9c">0</div>
<div class="a" style="left:20.5px;top:318.5px;width:6.5px;height:0.6px;background:#575757"></div>
<div class="t" style="left:22.6px;top:319.8px;font-size:3.7px;color:#9c9c9c">3</div>
<div class="t" style="left:22.6px;top:322.7px;font-size:3.7px;color:#9c9c9c">4</div>
<div class="t" style="left:22.6px;top:325.6px;font-size:3.7px;color:#9c9c9c">0</div>
<div class="t" style="left:22.6px;top:328.5px;font-size:3.7px;color:#9c9c9c">0</div>
<div class="a" style="left:20.5px;top:332.9px;width:6.5px;height:0.6px;background:#575757"></div>
<div class="t" style="left:22.6px;top:334.2px;font-size:3.7px;color:#9c9c9c">3</div>
<div class="t" style="left:22.6px;top:337.1px;font-size:3.7px;color:#9c9c9c">6</div>
<div class="t" style="left:22.6px;top:340.0px;font-size:3.7px;color:#9c9c9c">0</div>
<div class="t" style="left:22.6px;top:342.9px;font-size:3.7px;color:#9c9c9c">0</div>
<div class="a" style="left:20.5px;top:347.2px;width:6.5px;height:0.6px;background:#575757"></div>
<div class="t" style="left:22.6px;top:348.5px;font-size:3.7px;color:#9c9c9c">3</div>
<div class="t" style="left:22.6px;top:351.4px;font-size:3.7px;color:#9c9c9c">8</div>
<div class="t" style="left:22.6px;top:354.3px;font-size:3.7px;color:#9c9c9c">0</div>
<div class="t" style="left:22.6px;top:357.2px;font-size:3.7px;color:#9c9c9c">0</div>
<div class="a" style="left:20.5px;top:361.6px;width:6.5px;height:0.6px;background:#575757"></div>
<div class="t" style="left:22.6px;top:362.9px;font-size:3.7px;color:#9c9c9c">4</div>
<div class="t" style="left:22.6px;top:365.8px;font-size:3.7px;color:#9c9c9c">0</div>
<div class="t" style="left:22.6px;top:368.7px;font-size:3.7px;color:#9c9c9c">0</div>
<div class="t" style="left:22.6px;top:371.6px;font-size:3.7px;color:#9c9c9c">0</div>
<div class="a" style="left:20.5px;top:376.0px;width:6.5px;height:0.6px;background:#575757"></div>
<div class="t" style="left:22.6px;top:377.3px;font-size:3.7px;color:#9c9c9c">4</div>
<div class="t" style="left:22.6px;top:380.2px;font-size:3.7px;color:#9c9c9c">2</div>
<div class="t" style="left:22.6px;top:383.1px;font-size:3.7px;color:#9c9c9c">0</div>
<div class="t" style="left:22.6px;top:386.0px;font-size:3.7px;color:#9c9c9c">0</div>
<div class="a" style="left:20.5px;top:390.3px;width:6.5px;height:0.6px;background:#575757"></div>
<div class="t" style="left:22.6px;top:391.6px;font-size:3.7px;color:#9c9c9c">4</div>
<div class="t" style="left:22.6px;top:394.5px;font-size:3.7px;color:#9c9c9c">4</div>
<div class="t" style="left:22.6px;top:397.4px;font-size:3.7px;color:#9c9c9c">0</div>
<div class="a" style="left:20px;top:39px;width:7px;height:8px;background:#494949"></div>
<!-- pasteboard -->
<div class="a" style="left:27px;top:47px;width:582px;height:354px;background:#282828"></div>
<div class="a" style="left:609px;top:47px;width:8px;height:354px;background:#474747"></div>
<!-- canvas -->
<div class="a" style="left:108px;top:74px;width:421px;height:300px;background:#fff;box-shadow:0 0 1px 1px #1c1c1c"></div>
<svg class="a" style="left:214px;top:74px" width="209" height="300" viewBox="0 0 209 300">
<defs><clipPath id="lc"><rect x="0" y="0" width="209" height="300"/></clipPath><clipPath id="skyc"><path d="M-5 5H215V85.7L213.6 85.7L209.7 78.0L208.0 85.5L204.5 78.3L202.9 86.2L200.3 78.6L198.2 84.4L194.0 79.0L191.6 83.7L188.3 79.4L186.0 87.6L183.4 79.7L181.7 88.1L177.8 80.1L176.1 84.0L173.2 80.4L171.3 85.5L167.7 80.8L164.8 86.1L160.4 81.3L158.0 86.4L155.3 81.6L152.4 85.4L148.2 82.1L145.5 89.2L142.8 82.4L140.1 88.5L136.9 82.8L134.9 91.0L130.5 83.3L127.9 87.9L123.5 83.7L121.7 87.4L119.2 84.0L116.8 89.4L112.8 84.4L111.2 92.1L107.2 84.8L105.7 93.0L103.1 85.1L100.5 91.0L97.4 85.5L95.2 93.0L92.1 85.8L90.1 92.6L87.6 86.1L85.1 91.1L82.5 86.5L80.8 90.8L77.6 86.8L75.6 94.7L71.2 87.2L68.7 95.3L65.8 87.6L63.2 93.8L58.8 88.1L56.9 95.9L52.4 88.5L50.6 93.1L46.3 88.9L44.8 93.1L41.1 89.2L39.4 96.6L36.6 89.5L33.9 97.5L30.9 89.9L29.0 93.6L25.4 90.3L23.1 95.1L19.6 90.7L18.0 98.6L14.2 91.1L11.3 96.9L8.7 91.4L5.8 98.7L1.4 91.9L-1.3 99.1L-5.0 92.3Z"/></clipPath><clipPath id="grc"><path d="M-5 298V250.3L-5.0 250.3L-0.9 247.5L1.2 249.9L4.0 244.5L6.0 249.7L9.4 243.7L12.2 249.3L16.6 245.3L18.8 248.9L22.8 244.8L24.7 248.6L28.0 245.7L30.1 248.3L34.6 242.4L37.0 247.9L40.5 244.3L42.2 247.6L45.2 242.4L48.0 247.2L51.2 242.0L53.9 246.9L57.8 242.1L60.4 246.5L63.6 241.6L65.6 246.2L69.0 241.1L71.6 245.9L74.7 240.1L77.1 245.6L80.8 243.1L83.1 245.2L86.1 240.4L88.3 244.9L92.4 240.2L95.1 244.5L98.3 239.8L100.9 244.2L105.1 240.5L107.9 243.8L112.1 238.9L115.1 243.4L119.5 239.1L121.8 243.0L124.6 237.6L127.5 242.7L131.0 237.8L133.5 242.3L137.5 239.3L140.2 242.0L143.8 237.2L146.0 241.6L149.7 236.4L152.2 241.3L156.1 238.8L157.9 240.9L161.2 236.2L163.1 240.6L166.9 236.0L168.5 240.3L171.9 237.1L173.5 240.0L176.3 236.5L178.1 239.8L181.0 237.2L183.1 239.5L186.4 234.9L188.8 239.2L191.8 233.5L193.3 238.9L196.6 235.5L198.7 238.6L201.4 233.2L203.5 238.3L206.1 233.7L207.7 238.1L211.3 234.5L213.7 237.7L218.1 232.4V298Z"/></clipPath></defs>
<g clip-path="url(#lc)">
<rect x="0" y="0" width="209" height="300" fill="#f3f3f3"/>
<path d="M-5 5H215V80L150 86L100 90L50 93L-5 95Z" fill="#d8e9f7" fill-opacity="0.55"/>
<g clip-path="url(#skyc)" stroke="#9fcbed" stroke-width="1.25" stroke-linecap="round" fill="none"><path d="M-101.2 19.9L-61.4 -15.8" stroke-opacity="0.30"/><path d="M-88.7 12.9L-45.2 -26.2" stroke-opacity="0.39"/><path d="M-99.1 22.0L-77.7 2.7" stroke-opacity="0.31"/><path d="M-101.2 26.8L-72.8 1.2" stroke-opacity="0.41"/><path d="M-84.1 13.6L-40.5 -25.6" stroke-opacity="0.41"/><path d="M-98.8 31.4L-69.4 4.9" stroke-opacity="0.21"/><path d="M-88.7 21.7L-66.9 2.1" stroke-opacity="0.35"/><path d="M-89.0 29.2L-70.1 12.2" stroke-opacity="0.35"/><path d="M-97.0 34.2L-71.4 11.2" stroke-opacity="0.30"/><path d="M-82.0 20.8L-46.6 -11.0" stroke-opacity="0.35"/><path d="M-88.9 31.2L-56.4 2.0" stroke-opacity="0.26"/><path d="M-79.8 22.2L-41.8 -12.0" stroke-opacity="0.26"/><path d="M-78.4 27.6L-36.8 -9.9" stroke-opacity="0.25"/><path d="M-72.6 26.4L-35.6 -6.9" stroke-opacity="0.24"/><path d="M-83.9 37.4L-43.2 0.7" stroke-opacity="0.14"/><path d="M-74.2 30.7L-37.6 -2.3" stroke-opacity="0.39"/><path d="M-68.6 23.9L-37.6 -4.0" stroke-opacity="0.17"/><path d="M-81.1 40.7L-41.5 5.0" stroke-opacity="0.36"/><path d="M-57.8 24.6L-38.5 7.3" stroke-opacity="0.33"/><path d="M-71.8 37.8L-31.3 1.3" stroke-opacity="0.33"/><path d="M-50.3 16.3L-24.1 -7.3" stroke-opacity="0.24"/><path d="M-74.6 37.9L-39.9 6.6" stroke-opacity="0.14"/><path d="M-50.7 17.2L-17.2 -13.0" stroke-opacity="0.25"/><path d="M-56.2 25.9L-22.0 -4.9" stroke-opacity="0.14"/><path d="M-50.3 26.4L-27.8 6.1" stroke-opacity="0.29"/><path d="M-50.9 27.2L-25.4 4.3" stroke-opacity="0.28"/><path d="M-53.5 27.5L-28.9 5.3" stroke-opacity="0.33"/><path d="M-43.6 19.1L-22.8 0.4" stroke-opacity="0.30"/><path d="M-46.9 29.5L-5.5 -7.8" stroke-opacity="0.13"/><path d="M-52.9 37.4L-32.9 19.4" stroke-opacity="0.19"/><path d="M-36.2 19.3L7.7 -20.2" stroke-opacity="0.31"/><path d="M-44.5 29.9L-19.8 7.6" stroke-opacity="0.24"/><path d="M-33.0 22.1L7.2 -14.1" stroke-opacity="0.38"/><path d="M-33.1 23.8L0.9 -6.8" stroke-opacity="0.15"/><path d="M-47.1 38.8L-23.3 17.3" stroke-opacity="0.35"/><path d="M-20.8 15.6L10.0 -12.1" stroke-opacity="0.26"/><path d="M-41.4 34.8L-18.8 14.5" stroke-opacity="0.38"/><path d="M-36.5 30.9L-11.4 8.2" stroke-opacity="0.19"/><path d="M-14.7 18.8L4.7 1.3" stroke-opacity="0.33"/><path d="M-12.2 16.0L18.7 -11.7" stroke-opacity="0.21"/><path d="M-32.8 31.8L4.7 -2.0" stroke-opacity="0.19"/><path d="M-6.8 12.4L22.3 -13.7" stroke-opacity="0.26"/><path d="M-12.8 18.7L24.8 -15.2" stroke-opacity="0.32"/><path d="M-17.0 24.5L18.4 -7.3" stroke-opacity="0.14"/><path d="M-26.7 42.7L2.5 16.4" stroke-opacity="0.28"/><path d="M-23.2 38.0L-2.2 19.1" stroke-opacity="0.40"/><path d="M-23.3 35.1L1.7 12.7" stroke-opacity="0.20"/><path d="M-21.9 42.4L4.7 18.5" stroke-opacity="0.17"/><path d="M-5.3 24.3L23.7 -1.9" stroke-opacity="0.15"/><path d="M0.5 21.7L43.0 -16.6" stroke-opacity="0.13"/><path d="M1.0 25.7L32.2 -2.4" stroke-opacity="0.34"/><path d="M1.0 25.8L27.6 1.8" stroke-opacity="0.15"/><path d="M12.5 17.8L33.4 -1.0" stroke-opacity="0.16"/><path d="M-7.0 38.4L17.9 15.9" stroke-opacity="0.19"/><path d="M-7.0 37.0L29.8 3.9" stroke-opacity="0.23"/><path d="M3.7 32.0L33.2 5.5" stroke-opacity="0.39"/><path d="M13.3 27.2L51.6 -7.4" stroke-opacity="0.32"/><path d="M19.5 23.7L57.0 -10.0" stroke-opacity="0.23"/><path d="M5.4 36.9L25.7 18.6" stroke-opacity="0.21"/><path d="M18.0 21.5L56.5 -13.1" stroke-opacity="0.16"/><path d="M32.9 12.4L73.8 -24.4" stroke-opacity="0.25"/><path d="M7.0 42.3L34.2 17.8" stroke-opacity="0.34"/><path d="M13.6 35.0L46.0 5.8" stroke-opacity="0.40"/><path d="M21.0 31.2L42.6 11.7" stroke-opacity="0.25"/><path d="M40.7 18.7L79.3 -16.0" stroke-opacity="0.30"/><path d="M26.1 32.6L65.8 -3.2" stroke-opacity="0.13"/><path d="M42.8 14.1L73.9 -13.9" stroke-opacity="0.20"/><path d="M29.7 28.4L62.9 -1.5" stroke-opacity="0.23"/><path d="M46.2 18.5L90.3 -21.3" stroke-opacity="0.24"/><path d="M35.9 24.2L76.1 -12.0" stroke-opacity="0.15"/><path d="M31.2 33.3L73.2 -4.6" stroke-opacity="0.32"/><path d="M50.9 14.7L85.7 -16.7" stroke-opacity="0.27"/><path d="M40.9 25.8L64.3 4.7" stroke-opacity="0.21"/><path d="M52.4 25.0L83.4 -2.8" stroke-opacity="0.36"/><path d="M54.5 24.5L91.1 -8.5" stroke-opacity="0.23"/><path d="M51.9 22.6L88.2 -10.0" stroke-opacity="0.15"/><path d="M61.8 18.1L95.5 -12.2" stroke-opacity="0.40"/><path d="M43.4 39.4L80.6 5.9" stroke-opacity="0.41"/><path d="M68.8 18.5L105.3 -14.4" stroke-opacity="0.18"/><path d="M53.7 34.0L95.6 -3.8" stroke-opacity="0.24"/><path d="M52.8 38.4L81.5 12.6" stroke-opacity="0.39"/><path d="M53.2 37.5L81.8 11.7" stroke-opacity="0.33"/><path d="M57.5 32.4L99.2 -5.0" stroke-opacity="0.31"/><path d="M73.7 20.9L96.6 0.2" stroke-opacity="0.14"/><path d="M83.2 15.8L123.4 -20.4" stroke-opacity="0.25"/><path d="M67.4 32.8L109.5 -5.2" stroke-opacity="0.41"/><path d="M64.2 37.7L83.6 20.3" stroke-opacity="0.18"/><path d="M82.0 24.5L116.1 -6.1" stroke-opacity="0.14"/><path d="M92.7 17.2L133.0 -19.1" stroke-opacity="0.31"/><path d="M88.8 21.2L113.3 -0.9" stroke-opacity="0.15"/><path d="M71.2 38.4L93.9 18.0" stroke-opacity="0.15"/><path d="M96.6 19.9L134.3 -14.1" stroke-opacity="0.40"/><path d="M102.4 11.0L137.2 -20.4" stroke-opacity="0.14"/><path d="M90.3 29.7L118.6 4.2" stroke-opacity="0.15"/><path d="M88.8 30.7L121.5 1.3" stroke-opacity="0.23"/><path d="M110.3 10.8L141.8 -17.5" stroke-opacity="0.35"/><path d="M86.8 35.7L113.0 12.0" stroke-opacity="0.34"/><path d="M94.7 33.8L123.2 8.1" stroke-opacity="0.36"/><path d="M99.1 31.1L125.4 7.5" stroke-opacity="0.14"/><path d="M109.4 20.3L134.2 -2.0" stroke-opacity="0.15"/><path d="M108.5 29.0L152.7 -10.8" stroke-opacity="0.15"/><path d="M95.3 38.8L135.0 3.0" stroke-opacity="0.12"/><path d="M107.9 26.2L138.4 -1.3" stroke-opacity="0.19"/><path d="M112.6 25.6L142.6 -1.5" stroke-opacity="0.41"/><path d="M103.2 40.8L135.0 12.2" stroke-opacity="0.25"/><path d="M123.6 19.0L165.6 -18.8" stroke-opacity="0.13"/><path d="M133.3 19.9L162.6 -6.5" stroke-opacity="0.23"/><path d="M135.3 18.4L173.6 -16.1" stroke-opacity="0.25"/><path d="M118.7 32.4L163.1 -7.6" stroke-opacity="0.26"/><path d="M117.3 36.4L153.2 4.0" stroke-opacity="0.14"/><path d="M142.0 12.5L184.0 -25.3" stroke-opacity="0.37"/><path d="M122.7 39.7L156.8 9.0" stroke-opacity="0.40"/><path d="M133.0 30.5L156.4 9.5" stroke-opacity="0.23"/><path d="M139.6 27.7L162.2 7.5" stroke-opacity="0.15"/><path d="M135.9 29.8L171.2 -2.0" stroke-opacity="0.29"/><path d="M144.2 25.1L169.1 2.8" stroke-opacity="0.34"/><path d="M149.5 23.3L180.6 -4.7" stroke-opacity="0.25"/><path d="M154.4 18.8L188.8 -12.2" stroke-opacity="0.13"/><path d="M134.0 39.0L161.6 14.2" stroke-opacity="0.32"/><path d="M152.7 29.3L180.9 3.9" stroke-opacity="0.40"/><path d="M145.2 32.2L171.6 8.4" stroke-opacity="0.25"/><path d="M154.3 28.0L186.6 -1.1" stroke-opacity="0.29"/><path d="M154.9 31.1L177.1 11.2" stroke-opacity="0.18"/><path d="M148.9 34.8L169.1 16.7" stroke-opacity="0.41"/><path d="M172.3 17.1L198.1 -6.1" stroke-opacity="0.37"/><path d="M169.1 21.3L197.8 -4.6" stroke-opacity="0.38"/><path d="M157.5 31.7L199.5 -6.1" stroke-opacity="0.34"/><path d="M157.2 38.8L176.1 21.8" stroke-opacity="0.38"/><path d="M160.8 37.7L194.7 7.2" stroke-opacity="0.30"/><path d="M161.1 38.5L204.4 -0.5" stroke-opacity="0.15"/><path d="M180.4 24.4L211.0 -3.1" stroke-opacity="0.14"/><path d="M166.8 34.8L207.4 -1.6" stroke-opacity="0.21"/><path d="M180.4 25.9L218.7 -8.6" stroke-opacity="0.17"/><path d="M193.7 11.4L219.1 -11.5" stroke-opacity="0.23"/><path d="M186.5 20.8L216.2 -5.9" stroke-opacity="0.16"/><path d="M183.4 31.3L219.8 -1.5" stroke-opacity="0.16"/><path d="M188.6 26.1L220.0 -2.2" stroke-opacity="0.32"/><path d="M198.4 14.5L237.3 -20.6" stroke-opacity="0.20"/><path d="M184.1 34.0L225.8 -3.5" stroke-opacity="0.41"/><path d="M186.8 32.1L225.4 -2.7" stroke-opacity="0.37"/><path d="M208.6 15.1L228.5 -2.8" stroke-opacity="0.34"/><path d="M190.8 27.7L220.0 1.4" stroke-opacity="0.34"/><path d="M185.4 35.8L226.6 -1.3" stroke-opacity="0.40"/><path d="M200.8 25.8L242.6 -11.9" stroke-opacity="0.19"/><path d="M195.9 32.3L229.2 2.4" stroke-opacity="0.40"/><path d="M194.4 34.2L225.1 6.5" stroke-opacity="0.28"/><path d="M208.5 23.7L252.8 -16.2" stroke-opacity="0.29"/><path d="M201.6 37.7L231.3 11.0" stroke-opacity="0.23"/><path d="M208.0 31.5L250.5 -6.7" stroke-opacity="0.16"/><path d="M213.1 30.9L256.1 -7.9" stroke-opacity="0.29"/><path d="M223.2 19.8L249.1 -3.5" stroke-opacity="0.35"/><path d="M210.3 36.4L232.3 16.5" stroke-opacity="0.15"/><path d="M210.9 35.1L232.9 15.2" stroke-opacity="0.31"/><path d="M229.4 21.9L252.2 1.4" stroke-opacity="0.20"/><path d="M232.1 22.8L252.0 4.9" stroke-opacity="0.22"/><path d="M229.0 30.3L264.2 -1.4" stroke-opacity="0.20"/><path d="M219.5 35.8L260.9 -1.5" stroke-opacity="0.41"/><path d="M240.4 15.7L276.0 -16.3" stroke-opacity="0.40"/><path d="M238.9 25.0L279.6 -11.7" stroke-opacity="0.32"/><path d="M236.8 27.4L274.4 -6.5" stroke-opacity="0.36"/><path d="M223.7 42.1L255.2 13.8" stroke-opacity="0.37"/><path d="M238.2 24.8L270.7 -4.5" stroke-opacity="0.41"/><path d="M252.3 16.9L277.1 -5.4" stroke-opacity="0.31"/><path d="M229.8 40.4L255.5 17.2" stroke-opacity="0.34"/><path d="M241.0 30.8L270.9 3.9" stroke-opacity="0.30"/><path d="M253.5 19.7L283.6 -7.4" stroke-opacity="0.37"/><path d="M236.6 36.5L256.7 18.4" stroke-opacity="0.26"/><path d="M252.0 23.4L291.5 -12.1" stroke-opacity="0.36"/><path d="M265.4 19.4L300.2 -11.9" stroke-opacity="0.38"/><path d="M270.0 13.9L289.1 -3.3" stroke-opacity="0.14"/><path d="M254.9 27.9L276.0 8.8" stroke-opacity="0.12"/><path d="M268.2 17.8L294.6 -5.9" stroke-opacity="0.41"/><path d="M255.8 33.8L292.3 0.9" stroke-opacity="0.24"/><path d="M274.3 22.3L304.7 -5.1" stroke-opacity="0.32"/><path d="M281.5 14.8L322.7 -22.3" stroke-opacity="0.32"/><path d="M277.2 18.4L318.7 -19.0" stroke-opacity="0.22"/><path d="M280.2 19.7L316.5 -13.0" stroke-opacity="0.37"/><path d="M277.7 20.9L298.7 2.0" stroke-opacity="0.21"/><path d="M-108.1 59.7L-85.7 39.4" stroke-opacity="0.28"/><path d="M-106.7 62.9L-66.4 26.6" stroke-opacity="0.17"/><path d="M-97.2 58.7L-77.1 40.6" stroke-opacity="0.36"/><path d="M-95.4 56.1L-52.9 17.8" stroke-opacity="0.25"/><path d="M-105.0 71.4L-65.0 35.4" stroke-opacity="0.14"/><path d="M-89.2 54.0L-64.9 32.1" stroke-opacity="0.34"/><path d="M-81.0 50.6L-54.1 26.3" stroke-opacity="0.32"/><path d="M-102.6 76.1L-70.6 47.2" stroke-opacity="0.31"/><path d="M-89.9 59.6L-58.0 30.9" stroke-opacity="0.20"/><path d="M-82.1 55.3L-61.7 36.9" stroke-opacity="0.15"/><path d="M-91.8 66.0L-49.0 27.4" stroke-opacity="0.40"/><path d="M-91.5 69.1L-64.0 44.3" stroke-opacity="0.15"/><path d="M-75.1 59.6L-47.9 35.2" stroke-opacity="0.14"/><path d="M-85.0 67.9L-59.0 44.5" stroke-opacity="0.22"/><path d="M-74.5 61.0L-33.9 24.5" stroke-opacity="0.30"/><path d="M-85.4 74.5L-55.8 47.8" stroke-opacity="0.21"/><path d="M-70.3 58.8L-36.0 27.9" stroke-opacity="0.34"/><path d="M-62.4 51.3L-40.9 32.0" stroke-opacity="0.14"/><path d="M-64.7 57.1L-38.7 33.7" stroke-opacity="0.17"/><path d="M-65.4 64.1L-28.8 31.1" stroke-opacity="0.31"/><path d="M-64.9 63.3L-41.7 42.4" stroke-opacity="0.15"/><path d="M-51.7 57.5L-23.5 32.1" stroke-opacity="0.24"/><path d="M-68.9 73.3L-24.4 33.3" stroke-opacity="0.26"/><path d="M-58.2 63.2L-35.1 42.4" stroke-opacity="0.20"/><path d="M-50.8 56.9L-20.9 29.9" stroke-opacity="0.13"/><path d="M-59.1 69.1L-23.4 37.0" stroke-opacity="0.27"/><path d="M-54.8 67.7L-16.0 32.7" stroke-opacity="0.17"/><path d="M-46.5 61.8L-26.7 44.0" stroke-opacity="0.13"/><path d="M-36.1 53.6L8.2 13.7" stroke-opacity="0.13"/><path d="M-28.4 46.6L-4.9 25.4" stroke-opacity="0.14"/><path d="M-32.8 57.9L11.7 17.8" stroke-opacity="0.35"/><path d="M-46.6 65.2L-23.6 44.5" stroke-opacity="0.34"/><path d="M-41.8 69.7L-23.0 52.7" stroke-opacity="0.34"/><path d="M-32.7 60.7L9.6 22.6" stroke-opacity="0.20"/><path d="M-34.6 59.4L-9.3 36.6" stroke-opacity="0.19"/><path d="M-30.3 63.9L13.2 24.8" stroke-opacity="0.30"/><path d="M-33.8 69.4L-5.0 43.4" stroke-opacity="0.36"/><path d="M-41.1 72.6L-18.6 52.4" stroke-opacity="0.12"/><path d="M-33.2 70.2L-8.7 48.1" stroke-opacity="0.20"/><path d="M-10.5 51.1L13.5 29.5" stroke-opacity="0.33"/><path d="M-8.4 53.2L22.8 25.1" stroke-opacity="0.14"/><path d="M-17.4 62.3L13.3 34.7" stroke-opacity="0.22"/><path d="M-6.1 53.0L26.1 24.1" stroke-opacity="0.30"/><path d="M-20.0 68.3L6.7 44.3" stroke-opacity="0.31"/><path d="M-10.5 56.8L19.7 29.6" stroke-opacity="0.40"/><path d="M-17.1 65.3L14.4 36.9" stroke-opacity="0.17"/><path d="M-20.8 74.4L21.4 36.4" stroke-opacity="0.31"/><path d="M-12.2 67.0L12.4 44.9" stroke-opacity="0.20"/><path d="M-14.4 72.8L16.8 44.7" stroke-opacity="0.26"/><path d="M11.8 45.8L50.4 11.0" stroke-opacity="0.27"/><path d="M5.6 57.6L32.8 33.1" stroke-opacity="0.30"/><path d="M9.4 57.7L52.1 19.3" stroke-opacity="0.19"/><path d="M-7.4 71.2L27.3 39.9" stroke-opacity="0.27"/><path d="M15.2 58.0L52.6 24.4" stroke-opacity="0.25"/><path d="M4.9 70.0L49.2 30.0" stroke-opacity="0.15"/><path d="M14.0 63.4L49.5 31.4" stroke-opacity="0.16"/><path d="M21.3 58.7L55.8 27.6" stroke-opacity="0.37"/><path d="M29.2 52.6L58.9 25.9" stroke-opacity="0.22"/><path d="M23.9 60.1L56.3 30.9" stroke-opacity="0.33"/><path d="M21.6 62.3L53.0 34.0" stroke-opacity="0.13"/><path d="M23.3 59.2L50.2 35.0" stroke-opacity="0.40"/><path d="M34.9 54.6L61.2 30.9" stroke-opacity="0.29"/><path d="M23.3 65.1L54.3 37.2" stroke-opacity="0.12"/><path d="M25.6 70.1L48.0 49.9" stroke-opacity="0.23"/><path d="M36.2 55.1L62.4 31.5" stroke-opacity="0.28"/><path d="M42.0 53.5L64.3 33.4" stroke-opacity="0.35"/><path d="M32.0 62.9L73.3 25.7" stroke-opacity="0.39"/><path d="M32.5 69.8L51.2 53.0" stroke-opacity="0.34"/><path d="M35.5 70.1L54.2 53.2" stroke-opacity="0.39"/><path d="M44.3 56.8L88.5 17.0" stroke-opacity="0.25"/><path d="M40.5 66.5L70.9 39.1" stroke-opacity="0.21"/><path d="M44.7 61.6L69.7 39.1" stroke-opacity="0.42"/><path d="M55.7 57.1L87.9 28.2" stroke-opacity="0.23"/><path d="M40.5 67.8L59.8 50.4" stroke-opacity="0.32"/><path d="M48.4 64.3L73.0 42.1" stroke-opacity="0.38"/><path d="M44.5 73.3L64.9 55.0" stroke-opacity="0.21"/><path d="M71.0 52.5L90.8 34.7" stroke-opacity="0.14"/><path d="M62.9 57.0L103.2 20.7" stroke-opacity="0.14"/><path d="M62.1 66.3L85.4 45.3" stroke-opacity="0.27"/><path d="M79.5 49.5L101.6 29.6" stroke-opacity="0.39"/><path d="M63.0 69.1L107.1 29.4" stroke-opacity="0.40"/><path d="M63.7 70.8L84.1 52.3" stroke-opacity="0.32"/><path d="M66.2 63.6L93.8 38.7" stroke-opacity="0.27"/><path d="M71.8 64.7L97.3 41.8" stroke-opacity="0.35"/><path d="M86.8 49.0L106.2 31.6" stroke-opacity="0.34"/><path d="M78.6 61.7L113.1 30.6" stroke-opacity="0.18"/><path d="M67.8 77.6L89.3 58.3" stroke-opacity="0.22"/><path d="M91.1 51.5L116.9 28.2" stroke-opacity="0.39"/><path d="M83.7 63.8L103.5 46.0" stroke-opacity="0.23"/><path d="M90.6 58.6L117.1 34.8" stroke-opacity="0.32"/><path d="M88.4 66.7L131.6 27.8" stroke-opacity="0.31"/><path d="M97.6 55.3L136.7 20.1" stroke-opacity="0.17"/><path d="M87.9 62.4L124.4 29.6" stroke-opacity="0.13"/><path d="M94.4 66.6L122.3 41.5" stroke-opacity="0.33"/><path d="M88.5 71.2L132.8 31.3" stroke-opacity="0.21"/><path d="M106.0 58.7L140.4 27.6" stroke-opacity="0.21"/><path d="M97.1 65.0L134.8 31.0" stroke-opacity="0.41"/><path d="M107.4 58.1L138.2 30.3" stroke-opacity="0.14"/><path d="M110.8 59.9L144.5 29.6" stroke-opacity="0.38"/><path d="M107.4 62.7L138.9 34.3" stroke-opacity="0.35"/><path d="M125.6 51.4L147.4 31.8" stroke-opacity="0.28"/><path d="M102.2 73.8L135.7 43.6" stroke-opacity="0.22"/><path d="M124.0 54.1L163.8 18.3" stroke-opacity="0.16"/><path d="M124.0 55.3L148.2 33.5" stroke-opacity="0.12"/><path d="M124.5 57.1L163.7 21.8" stroke-opacity="0.34"/><path d="M116.6 67.3L150.3 37.0" stroke-opacity="0.30"/><path d="M126.1 62.6L160.4 31.8" stroke-opacity="0.24"/><path d="M123.4 62.0L159.7 29.3" stroke-opacity="0.23"/><path d="M130.5 60.5L166.1 28.4" stroke-opacity="0.23"/><path d="M131.2 59.8L167.5 27.2" stroke-opacity="0.28"/><path d="M126.8 70.1L168.3 32.8" stroke-opacity="0.40"/><path d="M142.5 56.5L178.4 24.2" stroke-opacity="0.24"/><path d="M126.9 70.3L163.3 37.5" stroke-opacity="0.18"/><path d="M149.1 52.7L180.6 24.3" stroke-opacity="0.23"/><path d="M157.4 52.2L181.0 31.0" stroke-opacity="0.20"/><path d="M149.4 60.0L191.5 22.1" stroke-opacity="0.41"/><path d="M140.9 66.0L163.4 45.7" stroke-opacity="0.12"/><path d="M150.5 62.3L175.7 39.5" stroke-opacity="0.32"/><path d="M154.8 61.5L188.6 31.2" stroke-opacity="0.31"/><path d="M143.0 75.3L183.0 39.3" stroke-opacity="0.37"/><path d="M161.3 60.3L203.1 22.6" stroke-opacity="0.23"/><path d="M165.2 54.2L203.6 19.5" stroke-opacity="0.23"/><path d="M154.1 73.2L184.7 45.6" stroke-opacity="0.17"/><path d="M160.2 66.1L197.7 32.3" stroke-opacity="0.20"/><path d="M157.7 68.5L181.6 47.0" stroke-opacity="0.39"/><path d="M160.2 64.8L202.6 26.7" stroke-opacity="0.21"/><path d="M181.4 54.2L209.4 29.0" stroke-opacity="0.18"/><path d="M164.8 65.6L187.7 45.0" stroke-opacity="0.32"/><path d="M166.8 65.1L192.9 41.6" stroke-opacity="0.25"/><path d="M169.7 66.3L201.9 37.3" stroke-opacity="0.38"/><path d="M172.0 68.7L214.7 30.2" stroke-opacity="0.39"/><path d="M174.7 67.0L207.4 37.6" stroke-opacity="0.39"/><path d="M169.4 73.5L199.2 46.7" stroke-opacity="0.23"/><path d="M186.0 66.1L204.7 49.3" stroke-opacity="0.33"/><path d="M204.0 47.9L238.3 17.1" stroke-opacity="0.27"/><path d="M193.9 60.3L226.8 30.7" stroke-opacity="0.27"/><path d="M209.8 44.7L254.4 4.5" stroke-opacity="0.14"/><path d="M197.4 56.9L237.5 20.8" stroke-opacity="0.20"/><path d="M204.5 52.4L226.8 32.3" stroke-opacity="0.31"/><path d="M204.8 59.4L245.0 23.2" stroke-opacity="0.34"/><path d="M197.7 68.1L227.3 41.5" stroke-opacity="0.25"/><path d="M191.1 73.4L226.1 41.9" stroke-opacity="0.36"/><path d="M202.2 64.3L227.2 41.7" stroke-opacity="0.40"/><path d="M203.6 63.1L229.4 39.8" stroke-opacity="0.24"/><path d="M221.6 52.6L257.2 20.5" stroke-opacity="0.24"/><path d="M202.6 70.3L235.7 40.5" stroke-opacity="0.18"/><path d="M218.1 55.7L258.5 19.4" stroke-opacity="0.31"/><path d="M215.5 63.4L241.8 39.7" stroke-opacity="0.38"/><path d="M220.8 57.9L253.3 28.6" stroke-opacity="0.19"/><path d="M226.2 56.7L248.6 36.6" stroke-opacity="0.26"/><path d="M235.9 46.5L259.0 25.7" stroke-opacity="0.34"/><path d="M234.4 51.9L258.1 30.6" stroke-opacity="0.33"/><path d="M231.0 60.3L275.5 20.2" stroke-opacity="0.16"/><path d="M218.3 74.8L255.2 41.6" stroke-opacity="0.40"/><path d="M238.8 58.5L259.0 40.3" stroke-opacity="0.33"/><path d="M246.6 46.8L281.6 15.3" stroke-opacity="0.16"/><path d="M249.0 46.8L286.0 13.5" stroke-opacity="0.32"/><path d="M231.4 71.0L262.0 43.5" stroke-opacity="0.34"/><path d="M237.8 63.0L269.1 34.8" stroke-opacity="0.26"/><path d="M233.3 73.9L272.7 38.4" stroke-opacity="0.22"/><path d="M234.0 72.2L277.0 33.4" stroke-opacity="0.26"/><path d="M253.4 56.1L294.3 19.2" stroke-opacity="0.36"/><path d="M260.0 51.3L283.3 30.3" stroke-opacity="0.39"/><path d="M267.1 49.0L303.2 16.5" stroke-opacity="0.28"/><path d="M269.1 47.3L301.6 18.0" stroke-opacity="0.33"/><path d="M262.1 59.3L290.3 33.9" stroke-opacity="0.24"/><path d="M249.8 67.4L276.1 43.7" stroke-opacity="0.38"/><path d="M255.8 71.4L285.2 44.9" stroke-opacity="0.19"/><path d="M253.2 70.6L284.7 42.3" stroke-opacity="0.16"/><path d="M261.3 70.6L295.6 39.8" stroke-opacity="0.32"/><path d="M264.3 65.3L302.6 30.8" stroke-opacity="0.33"/><path d="M278.0 52.1L314.9 18.9" stroke-opacity="0.23"/><path d="M266.8 67.0L286.3 49.4" stroke-opacity="0.38"/><path d="M-119.8 109.3L-98.5 90.2" stroke-opacity="0.26"/><path d="M-107.1 94.7L-75.2 65.9" stroke-opacity="0.41"/><path d="M-108.5 102.6L-87.4 83.6" stroke-opacity="0.34"/><path d="M-88.7 83.1L-66.4 63.0" stroke-opacity="0.34"/><path d="M-98.0 96.0L-71.6 72.2" stroke-opacity="0.25"/><path d="M-78.3 86.7L-56.3 67.0" stroke-opacity="0.19"/><path d="M-99.4 104.0L-69.4 77.0" stroke-opacity="0.37"/><path d="M-75.4 80.2L-43.9 51.8" stroke-opacity="0.38"/><path d="M-70.7 82.2L-31.8 47.2" stroke-opacity="0.35"/><path d="M-88.0 99.5L-63.8 77.6" stroke-opacity="0.13"/><path d="M-77.6 90.9L-33.1 50.9" stroke-opacity="0.31"/><path d="M-66.2 86.1L-34.9 57.9" stroke-opacity="0.34"/><path d="M-77.2 92.5L-53.5 71.2" stroke-opacity="0.41"/><path d="M-64.9 81.9L-25.1 46.1" stroke-opacity="0.17"/><path d="M-76.3 95.8L-39.3 62.5" stroke-opacity="0.32"/><path d="M-67.6 89.0L-28.7 53.9" stroke-opacity="0.20"/><path d="M-79.3 107.5L-58.9 89.1" stroke-opacity="0.29"/><path d="M-61.3 90.1L-20.1 53.1" stroke-opacity="0.41"/><path d="M-52.6 84.8L-30.0 64.6" stroke-opacity="0.33"/><path d="M-58.5 89.5L-20.5 55.3" stroke-opacity="0.39"/><path d="M-63.3 97.1L-24.9 62.5" stroke-opacity="0.28"/><path d="M-62.7 99.7L-31.9 72.0" stroke-opacity="0.19"/><path d="M-66.0 108.5L-38.8 84.0" stroke-opacity="0.14"/><path d="M-62.6 104.8L-33.1 78.3" stroke-opacity="0.14"/><path d="M-54.4 102.8L-35.7 85.9" stroke-opacity="0.17"/><path d="M-53.1 97.5L-9.8 58.6" stroke-opacity="0.38"/><path d="M-31.6 80.5L4.3 48.2" stroke-opacity="0.26"/><path d="M-38.5 93.0L-7.4 65.1" stroke-opacity="0.27"/><path d="M-49.0 101.0L-17.2 72.4" stroke-opacity="0.18"/><path d="M-52.4 110.8L-21.2 82.7" stroke-opacity="0.27"/><path d="M-30.2 88.5L0.2 61.1" stroke-opacity="0.29"/><path d="M-36.1 95.4L0.2 62.7" stroke-opacity="0.31"/><path d="M-33.6 91.8L-2.4 63.7" stroke-opacity="0.26"/><path d="M-19.1 89.1L20.6 53.4" stroke-opacity="0.18"/><path d="M-20.1 85.3L2.1 65.3" stroke-opacity="0.16"/><path d="M-33.1 103.3L-9.1 81.7" stroke-opacity="0.13"/><path d="M-21.5 95.5L10.9 66.4" stroke-opacity="0.37"/><path d="M-34.1 103.1L-6.9 78.6" stroke-opacity="0.31"/><path d="M-7.9 87.2L30.1 53.0" stroke-opacity="0.22"/><path d="M-23.4 101.9L11.8 70.2" stroke-opacity="0.28"/><path d="M-14.3 98.1L25.9 61.9" stroke-opacity="0.28"/><path d="M-18.9 105.0L11.8 77.4" stroke-opacity="0.13"/><path d="M-22.7 104.6L8.1 76.9" stroke-opacity="0.19"/><path d="M4.4 82.4L38.1 52.0" stroke-opacity="0.31"/><path d="M-14.5 103.6L15.2 76.8" stroke-opacity="0.41"/><path d="M7.2 85.7L47.8 49.2" stroke-opacity="0.37"/><path d="M-8.8 101.3L20.1 75.2" stroke-opacity="0.20"/><path d="M7.0 91.4L43.5 58.6" stroke-opacity="0.27"/><path d="M8.2 90.9L30.3 70.9" stroke-opacity="0.17"/><path d="M13.0 91.0L32.2 73.6" stroke-opacity="0.37"/><path d="M0.3 97.2L26.9 73.3" stroke-opacity="0.20"/><path d="M11.7 90.7L42.0 63.3" stroke-opacity="0.16"/><path d="M13.3 96.7L39.3 73.3" stroke-opacity="0.40"/><path d="M11.4 98.6L32.4 79.7" stroke-opacity="0.20"/><path d="M14.7 96.3L34.8 78.1" stroke-opacity="0.26"/><path d="M15.9 99.0L53.0 65.6" stroke-opacity="0.21"/><path d="M26.5 87.0L61.7 55.2" stroke-opacity="0.39"/><path d="M11.1 105.2L40.2 78.9" stroke-opacity="0.39"/><path d="M21.3 95.8L65.1 56.4" stroke-opacity="0.23"/><path d="M39.5 80.7L60.2 62.0" stroke-opacity="0.14"/><path d="M22.9 97.6L45.8 77.0" stroke-opacity="0.13"/><path d="M18.7 103.2L57.5 68.3" stroke-opacity="0.36"/><path d="M34.5 95.5L75.9 58.2" stroke-opacity="0.14"/><path d="M48.0 86.0L74.4 62.3" stroke-opacity="0.27"/><path d="M35.9 96.8L67.3 68.6" stroke-opacity="0.28"/><path d="M43.9 91.7L71.3 67.0" stroke-opacity="0.19"/><path d="M36.6 98.6L60.2 77.4" stroke-opacity="0.28"/><path d="M56.8 81.8L78.6 62.3" stroke-opacity="0.24"/><path d="M60.2 82.5L98.2 48.3" stroke-opacity="0.27"/><path d="M60.7 88.2L97.0 55.5" stroke-opacity="0.31"/><path d="M53.6 96.4L79.7 72.9" stroke-opacity="0.27"/><path d="M57.2 94.2L101.4 54.4" stroke-opacity="0.31"/><path d="M50.6 100.1L92.0 62.8" stroke-opacity="0.18"/><path d="M49.3 99.9L80.3 72.0" stroke-opacity="0.29"/><path d="M72.2 87.7L111.5 52.3" stroke-opacity="0.22"/><path d="M56.8 101.6L98.9 63.7" stroke-opacity="0.14"/><path d="M77.5 87.4L116.8 52.0" stroke-opacity="0.13"/><path d="M77.9 87.0L114.2 54.3" stroke-opacity="0.37"/><path d="M78.9 85.7L102.3 64.6" stroke-opacity="0.28"/><path d="M82.6 87.7L109.3 63.7" stroke-opacity="0.24"/><path d="M63.3 100.3L106.9 61.0" stroke-opacity="0.23"/><path d="M88.8 84.5L111.4 64.2" stroke-opacity="0.18"/><path d="M67.4 104.4L86.1 87.5" stroke-opacity="0.19"/><path d="M73.2 99.0L108.5 67.3" stroke-opacity="0.33"/><path d="M72.2 99.3L105.3 69.4" stroke-opacity="0.40"/><path d="M83.1 97.3L116.6 67.1" stroke-opacity="0.29"/><path d="M84.0 94.7L114.1 67.6" stroke-opacity="0.22"/><path d="M98.8 86.8L122.8 65.2" stroke-opacity="0.13"/><path d="M97.6 88.9L128.4 61.2" stroke-opacity="0.36"/><path d="M90.1 99.8L111.1 80.9" stroke-opacity="0.14"/><path d="M87.9 103.2L130.3 65.1" stroke-opacity="0.37"/><path d="M105.3 85.4L142.0 52.4" stroke-opacity="0.34"/><path d="M100.4 97.9L139.5 62.7" stroke-opacity="0.42"/><path d="M115.0 84.1L146.7 55.5" stroke-opacity="0.16"/><path d="M100.1 99.1L122.2 79.2" stroke-opacity="0.31"/><path d="M102.8 98.3L146.0 59.3" stroke-opacity="0.22"/><path d="M110.9 97.0L154.8 57.5" stroke-opacity="0.21"/><path d="M97.4 110.4L140.4 71.7" stroke-opacity="0.29"/><path d="M112.1 94.9L151.3 59.6" stroke-opacity="0.35"/><path d="M103.4 104.3L134.8 76.0" stroke-opacity="0.20"/><path d="M124.8 91.6L167.8 52.9" stroke-opacity="0.32"/><path d="M123.4 91.3L162.4 56.1" stroke-opacity="0.35"/><path d="M126.4 94.2L147.4 75.2" stroke-opacity="0.18"/><path d="M125.3 92.7L150.7 69.9" stroke-opacity="0.28"/><path d="M119.5 99.0L141.9 78.8" stroke-opacity="0.12"/><path d="M118.2 107.6L161.8 68.3" stroke-opacity="0.18"/><path d="M138.5 92.5L160.1 73.0" stroke-opacity="0.19"/><path d="M129.8 102.1L164.8 70.5" stroke-opacity="0.13"/><path d="M135.5 95.8L179.5 56.2" stroke-opacity="0.38"/><path d="M140.0 95.1L161.2 76.0" stroke-opacity="0.18"/><path d="M140.0 93.9L172.5 64.7" stroke-opacity="0.40"/><path d="M143.1 98.2L168.4 75.5" stroke-opacity="0.41"/><path d="M147.7 98.1L191.7 58.5" stroke-opacity="0.40"/><path d="M137.0 103.8L168.8 75.1" stroke-opacity="0.29"/><path d="M147.4 94.7L170.5 73.9" stroke-opacity="0.24"/><path d="M161.1 92.2L198.4 58.7" stroke-opacity="0.20"/><path d="M164.5 85.5L201.1 52.6" stroke-opacity="0.30"/><path d="M156.4 93.5L198.8 55.3" stroke-opacity="0.39"/><path d="M157.3 102.7L201.0 63.4" stroke-opacity="0.15"/><path d="M176.6 84.2L212.5 52.0" stroke-opacity="0.32"/><path d="M165.4 92.0L187.7 72.0" stroke-opacity="0.39"/><path d="M171.5 94.9L194.4 74.3" stroke-opacity="0.41"/><path d="M167.4 98.7L187.4 80.7" stroke-opacity="0.14"/><path d="M178.2 93.8L212.8 62.6" stroke-opacity="0.34"/><path d="M175.0 91.7L207.8 62.2" stroke-opacity="0.33"/><path d="M187.6 87.2L217.9 59.9" stroke-opacity="0.36"/><path d="M183.3 92.4L208.0 70.2" stroke-opacity="0.15"/><path d="M191.0 86.1L215.9 63.6" stroke-opacity="0.30"/><path d="M176.8 104.5L209.4 75.2" stroke-opacity="0.39"/><path d="M196.5 86.0L218.2 66.5" stroke-opacity="0.30"/><path d="M178.5 102.0L220.7 64.0" stroke-opacity="0.14"/><path d="M199.2 90.3L231.2 61.5" stroke-opacity="0.18"/><path d="M195.2 92.2L228.7 62.1" stroke-opacity="0.15"/><path d="M182.5 102.1L221.8 66.8" stroke-opacity="0.33"/><path d="M184.3 106.6L210.6 82.9" stroke-opacity="0.28"/><path d="M202.8 87.7L225.9 67.0" stroke-opacity="0.18"/><path d="M188.5 105.9L211.3 85.4" stroke-opacity="0.35"/><path d="M196.9 99.0L228.8 70.3" stroke-opacity="0.41"/><path d="M195.0 106.6L236.0 69.7" stroke-opacity="0.29"/><path d="M222.7 86.1L252.9 58.9" stroke-opacity="0.16"/><path d="M201.9 105.1L238.7 72.0" stroke-opacity="0.16"/><path d="M224.8 82.6L261.1 49.9" stroke-opacity="0.37"/><path d="M206.3 97.8L234.2 72.6" stroke-opacity="0.25"/><path d="M210.4 97.0L234.3 75.5" stroke-opacity="0.20"/><path d="M222.9 95.2L252.5 68.5" stroke-opacity="0.37"/><path d="M229.9 86.9L271.1 49.8" stroke-opacity="0.30"/><path d="M218.1 98.7L260.8 60.3" stroke-opacity="0.22"/><path d="M217.3 105.3L250.8 75.1" stroke-opacity="0.18"/><path d="M228.3 92.3L268.6 56.0" stroke-opacity="0.40"/><path d="M228.4 96.5L264.3 64.1" stroke-opacity="0.17"/><path d="M243.9 86.2L282.3 51.6" stroke-opacity="0.40"/><path d="M228.9 103.2L272.9 63.7" stroke-opacity="0.29"/><path d="M222.5 110.7L245.5 90.0" stroke-opacity="0.24"/><path d="M251.9 83.5L282.0 56.4" stroke-opacity="0.31"/><path d="M232.7 104.0L275.8 65.2" stroke-opacity="0.16"/><path d="M249.6 86.9L273.4 65.5" stroke-opacity="0.36"/><path d="M253.0 87.2L294.7 49.6" stroke-opacity="0.42"/><path d="M235.0 107.5L270.2 75.8" stroke-opacity="0.26"/><path d="M237.6 106.3L266.1 80.6" stroke-opacity="0.15"/><path d="M260.7 85.0L296.7 52.6" stroke-opacity="0.31"/><path d="M269.7 82.2L300.8 54.2" stroke-opacity="0.13"/><path d="M247.7 99.9L271.3 78.6" stroke-opacity="0.40"/><path d="M261.4 95.9L292.7 67.7" stroke-opacity="0.34"/><path d="M246.3 109.8L265.5 92.6" stroke-opacity="0.13"/><path d="M260.0 101.6L292.0 72.7" stroke-opacity="0.41"/><path d="M280.6 80.4L313.1 51.1" stroke-opacity="0.16"/><path d="M265.4 95.2L286.7 76.1" stroke-opacity="0.14"/><path d="M282.5 87.0L313.0 59.6" stroke-opacity="0.20"/><path d="M275.7 90.2L301.6 66.9" stroke-opacity="0.28"/></g>
<path d="M-5 254L100 248L215 242V298H-5Z" fill="#d6eAd2" fill-opacity="0.5"/>
<g clip-path="url(#grc)" stroke="#84c082" stroke-width="1.5" stroke-linecap="round" fill="none"><path d="M-112.2 271.5L-74.0 239.4" stroke-opacity="0.20"/><path d="M-98.5 263.7L-58.7 230.3" stroke-opacity="0.32"/><path d="M-108.5 272.0L-80.0 248.1" stroke-opacity="0.25"/><path d="M-95.4 263.0L-66.0 238.4" stroke-opacity="0.49"/><path d="M-105.0 275.7L-78.5 253.5" stroke-opacity="0.42"/><path d="M-79.1 257.5L-51.6 234.4" stroke-opacity="0.24"/><path d="M-102.1 280.0L-65.3 249.2" stroke-opacity="0.21"/><path d="M-88.2 271.1L-60.6 248.0" stroke-opacity="0.34"/><path d="M-94.9 278.4L-61.6 250.5" stroke-opacity="0.30"/><path d="M-70.3 256.7L-34.5 226.7" stroke-opacity="0.43"/><path d="M-86.1 273.0L-61.2 252.1" stroke-opacity="0.54"/><path d="M-61.8 253.9L-30.5 227.7" stroke-opacity="0.36"/><path d="M-70.4 263.2L-45.4 242.3" stroke-opacity="0.40"/><path d="M-65.4 264.2L-30.5 234.9" stroke-opacity="0.36"/><path d="M-80.5 275.3L-39.4 240.8" stroke-opacity="0.51"/><path d="M-71.0 268.5L-33.0 236.7" stroke-opacity="0.24"/><path d="M-54.0 261.8L-27.7 239.8" stroke-opacity="0.55"/><path d="M-50.0 257.1L-23.6 234.9" stroke-opacity="0.50"/><path d="M-55.5 266.2L-27.4 242.6" stroke-opacity="0.46"/><path d="M-67.0 276.7L-29.1 244.9" stroke-opacity="0.33"/><path d="M-67.2 275.2L-35.4 248.6" stroke-opacity="0.40"/><path d="M-53.5 270.3L-22.6 244.4" stroke-opacity="0.32"/><path d="M-62.4 280.1L-24.5 248.4" stroke-opacity="0.42"/><path d="M-42.4 264.6L-17.9 243.9" stroke-opacity="0.54"/><path d="M-31.0 252.3L0.2 226.1" stroke-opacity="0.34"/><path d="M-42.2 267.2L-8.3 238.8" stroke-opacity="0.36"/><path d="M-30.1 256.3L8.0 224.3" stroke-opacity="0.40"/><path d="M-40.7 268.6L-14.0 246.2" stroke-opacity="0.23"/><path d="M-25.2 262.9L5.7 236.9" stroke-opacity="0.51"/><path d="M-28.5 265.9L4.3 238.3" stroke-opacity="0.49"/><path d="M-40.3 277.0L-5.7 247.9" stroke-opacity="0.36"/><path d="M-13.0 255.7L26.7 222.4" stroke-opacity="0.30"/><path d="M-14.1 258.3L20.7 229.0" stroke-opacity="0.54"/><path d="M-26.5 268.7L8.5 239.4" stroke-opacity="0.54"/><path d="M-9.3 253.9L22.8 227.0" stroke-opacity="0.41"/><path d="M-6.0 259.2L17.7 239.3" stroke-opacity="0.29"/><path d="M1.7 257.6L28.9 234.8" stroke-opacity="0.39"/><path d="M-13.2 272.5L27.8 238.1" stroke-opacity="0.55"/><path d="M-1.5 258.3L37.9 225.2" stroke-opacity="0.22"/><path d="M5.1 262.4L29.7 241.8" stroke-opacity="0.24"/><path d="M-13.9 274.3L10.7 253.7" stroke-opacity="0.46"/><path d="M-0.9 270.2L31.3 243.2" stroke-opacity="0.54"/><path d="M-9.6 280.9L22.0 254.4" stroke-opacity="0.25"/><path d="M3.9 265.4L32.1 241.7" stroke-opacity="0.36"/><path d="M21.0 260.1L57.6 229.4" stroke-opacity="0.29"/><path d="M-0.3 280.3L36.7 249.2" stroke-opacity="0.26"/><path d="M13.2 265.8L54.3 231.3" stroke-opacity="0.23"/><path d="M10.8 270.0L45.7 240.7" stroke-opacity="0.47"/><path d="M30.5 256.2L54.6 236.0" stroke-opacity="0.40"/><path d="M22.2 266.3L55.2 238.6" stroke-opacity="0.38"/><path d="M24.1 268.8L51.2 246.2" stroke-opacity="0.32"/><path d="M18.7 280.0L59.5 245.7" stroke-opacity="0.20"/><path d="M33.0 265.1L63.0 239.9" stroke-opacity="0.22"/><path d="M34.7 268.4L76.6 233.3" stroke-opacity="0.44"/><path d="M43.1 265.0L80.7 233.4" stroke-opacity="0.29"/><path d="M41.6 265.9L76.2 236.8" stroke-opacity="0.28"/><path d="M40.3 270.8L67.4 248.1" stroke-opacity="0.23"/><path d="M35.6 273.3L73.3 241.7" stroke-opacity="0.23"/><path d="M48.3 265.3L79.7 238.9" stroke-opacity="0.38"/><path d="M50.3 267.5L91.3 233.1" stroke-opacity="0.49"/><path d="M46.4 278.0L75.3 253.8" stroke-opacity="0.35"/><path d="M46.0 276.0L86.5 242.0" stroke-opacity="0.52"/><path d="M70.4 255.7L110.0 222.5" stroke-opacity="0.42"/><path d="M56.4 268.9L90.4 240.4" stroke-opacity="0.44"/><path d="M70.3 260.0L104.3 231.5" stroke-opacity="0.45"/><path d="M52.4 278.0L92.5 244.4" stroke-opacity="0.51"/><path d="M59.1 274.6L88.4 250.1" stroke-opacity="0.21"/><path d="M69.5 272.6L109.5 239.0" stroke-opacity="0.53"/><path d="M65.8 274.0L103.1 242.7" stroke-opacity="0.48"/><path d="M67.6 280.0L106.3 247.6" stroke-opacity="0.32"/><path d="M87.2 264.0L118.4 237.9" stroke-opacity="0.52"/><path d="M89.8 264.3L119.5 239.4" stroke-opacity="0.48"/><path d="M93.7 265.4L131.0 234.0" stroke-opacity="0.47"/><path d="M77.1 281.1L113.7 250.4" stroke-opacity="0.23"/><path d="M83.4 278.1L120.1 247.3" stroke-opacity="0.28"/><path d="M100.0 266.8L136.0 236.6" stroke-opacity="0.31"/><path d="M109.7 256.1L151.2 221.3" stroke-opacity="0.38"/><path d="M88.5 274.5L124.3 244.5" stroke-opacity="0.24"/><path d="M112.5 262.8L145.9 234.8" stroke-opacity="0.37"/><path d="M101.1 274.0L130.5 249.3" stroke-opacity="0.41"/><path d="M117.9 263.8L150.4 236.5" stroke-opacity="0.23"/><path d="M100.4 282.1L142.3 246.9" stroke-opacity="0.22"/><path d="M129.6 258.3L167.7 226.3" stroke-opacity="0.35"/><path d="M122.3 264.9L146.6 244.5" stroke-opacity="0.30"/><path d="M111.7 270.1L143.3 243.6" stroke-opacity="0.35"/><path d="M126.0 264.2L155.8 239.1" stroke-opacity="0.35"/><path d="M131.2 258.0L165.9 228.9" stroke-opacity="0.45"/><path d="M127.5 264.5L164.9 233.0" stroke-opacity="0.53"/><path d="M145.9 256.7L181.4 226.9" stroke-opacity="0.51"/><path d="M126.6 276.5L166.7 242.9" stroke-opacity="0.49"/><path d="M140.4 264.3L176.4 234.1" stroke-opacity="0.23"/><path d="M150.9 255.7L189.3 223.5" stroke-opacity="0.41"/><path d="M144.2 266.4L184.0 233.0" stroke-opacity="0.47"/><path d="M149.5 259.7L179.6 234.5" stroke-opacity="0.29"/><path d="M134.9 277.8L167.7 250.3" stroke-opacity="0.25"/><path d="M135.4 278.9L173.4 247.0" stroke-opacity="0.51"/><path d="M160.9 261.4L195.7 232.2" stroke-opacity="0.44"/><path d="M147.1 271.3L178.7 244.8" stroke-opacity="0.43"/><path d="M166.7 260.6L201.6 231.3" stroke-opacity="0.48"/><path d="M154.2 271.2L180.5 249.1" stroke-opacity="0.44"/><path d="M177.4 258.9L204.4 236.3" stroke-opacity="0.35"/><path d="M177.2 253.2L201.6 232.7" stroke-opacity="0.41"/><path d="M163.3 268.6L187.0 248.6" stroke-opacity="0.33"/><path d="M182.3 259.2L214.9 231.8" stroke-opacity="0.49"/><path d="M181.8 258.3L206.7 237.4" stroke-opacity="0.50"/><path d="M183.9 256.0L216.0 229.0" stroke-opacity="0.29"/><path d="M175.0 270.0L209.8 240.9" stroke-opacity="0.51"/><path d="M175.0 271.5L209.7 242.4" stroke-opacity="0.38"/><path d="M179.7 273.0L208.7 248.7" stroke-opacity="0.45"/><path d="M170.1 282.1L198.9 257.9" stroke-opacity="0.24"/><path d="M197.1 257.4L239.0 222.2" stroke-opacity="0.49"/><path d="M190.6 271.7L213.7 252.3" stroke-opacity="0.38"/><path d="M190.7 267.8L222.6 241.0" stroke-opacity="0.34"/><path d="M187.9 269.9L226.1 237.8" stroke-opacity="0.38"/><path d="M194.7 270.1L229.8 240.7" stroke-opacity="0.26"/><path d="M202.5 264.9L232.9 239.4" stroke-opacity="0.39"/><path d="M189.1 278.0L218.0 253.7" stroke-opacity="0.27"/><path d="M219.1 254.1L242.2 234.7" stroke-opacity="0.55"/><path d="M202.0 274.8L234.7 247.3" stroke-opacity="0.48"/><path d="M202.0 278.3L241.7 244.9" stroke-opacity="0.21"/><path d="M216.8 258.8L252.7 228.7" stroke-opacity="0.52"/><path d="M202.6 277.9L243.0 244.0" stroke-opacity="0.33"/><path d="M214.0 266.0L250.6 235.3" stroke-opacity="0.22"/><path d="M223.5 268.3L260.4 237.4" stroke-opacity="0.51"/><path d="M229.1 259.5L262.0 232.0" stroke-opacity="0.39"/><path d="M225.1 268.3L257.6 241.1" stroke-opacity="0.31"/><path d="M234.8 263.3L276.9 228.0" stroke-opacity="0.47"/><path d="M219.6 273.0L248.0 249.1" stroke-opacity="0.52"/><path d="M246.8 255.3L281.9 225.9" stroke-opacity="0.54"/><path d="M248.9 259.5L272.3 239.9" stroke-opacity="0.23"/><path d="M249.4 254.0L283.6 225.3" stroke-opacity="0.42"/><path d="M229.5 276.9L255.5 255.1" stroke-opacity="0.47"/><path d="M252.2 259.5L278.9 237.2" stroke-opacity="0.27"/><path d="M233.0 279.1L267.2 250.4" stroke-opacity="0.28"/><path d="M232.4 276.4L263.0 250.7" stroke-opacity="0.30"/><path d="M248.3 272.4L288.4 238.8" stroke-opacity="0.54"/><path d="M265.9 253.3L302.3 222.7" stroke-opacity="0.49"/><path d="M241.3 275.0L275.8 246.1" stroke-opacity="0.39"/><path d="M269.1 255.6L294.0 234.7" stroke-opacity="0.41"/><path d="M253.0 271.4L280.0 248.6" stroke-opacity="0.28"/><path d="M268.6 259.8L304.3 229.8" stroke-opacity="0.21"/><path d="M253.3 281.1L287.9 252.2" stroke-opacity="0.27"/><path d="M267.9 272.4L294.1 250.4" stroke-opacity="0.37"/><path d="M266.1 272.4L302.9 241.5" stroke-opacity="0.32"/><path d="M290.8 251.9L316.9 229.9" stroke-opacity="0.55"/><path d="M-105.7 289.4L-68.2 257.9" stroke-opacity="0.21"/><path d="M-88.9 276.6L-61.1 253.2" stroke-opacity="0.49"/><path d="M-91.6 280.8L-56.4 251.3" stroke-opacity="0.50"/><path d="M-89.4 286.7L-51.9 255.3" stroke-opacity="0.45"/><path d="M-98.2 298.1L-69.8 274.2" stroke-opacity="0.44"/><path d="M-90.7 286.7L-62.2 262.8" stroke-opacity="0.40"/><path d="M-76.3 282.0L-40.2 251.7" stroke-opacity="0.28"/><path d="M-94.4 297.3L-58.8 267.5" stroke-opacity="0.22"/><path d="M-81.8 288.3L-56.8 267.4" stroke-opacity="0.27"/><path d="M-79.8 287.8L-39.3 253.7" stroke-opacity="0.21"/><path d="M-69.4 279.0L-35.0 250.1" stroke-opacity="0.30"/><path d="M-67.8 284.7L-38.1 259.8" stroke-opacity="0.43"/><path d="M-57.7 277.4L-23.4 248.6" stroke-opacity="0.27"/><path d="M-58.1 279.7L-28.4 254.8" stroke-opacity="0.32"/><path d="M-67.7 291.7L-33.9 263.3" stroke-opacity="0.33"/><path d="M-51.3 279.8L-19.4 253.0" stroke-opacity="0.30"/><path d="M-70.3 293.7L-46.5 273.7" stroke-opacity="0.42"/><path d="M-58.9 288.7L-30.1 264.5" stroke-opacity="0.26"/><path d="M-43.7 273.2L-6.0 241.6" stroke-opacity="0.51"/><path d="M-40.3 280.4L-9.6 254.7" stroke-opacity="0.21"/><path d="M-54.6 292.2L-15.6 259.4" stroke-opacity="0.20"/><path d="M-43.2 283.8L-6.0 252.6" stroke-opacity="0.41"/><path d="M-45.3 288.3L-15.6 263.4" stroke-opacity="0.52"/><path d="M-52.1 294.3L-26.0 272.3" stroke-opacity="0.34"/><path d="M-48.4 296.3L-18.0 270.7" stroke-opacity="0.47"/><path d="M-34.5 282.4L-6.8 259.2" stroke-opacity="0.41"/><path d="M-36.7 286.1L-2.3 257.3" stroke-opacity="0.31"/><path d="M-44.8 300.6L-13.9 274.6" stroke-opacity="0.32"/><path d="M-42.7 295.7L-2.6 262.0" stroke-opacity="0.20"/><path d="M-24.1 284.2L10.7 255.0" stroke-opacity="0.43"/><path d="M-19.6 279.6L16.5 249.3" stroke-opacity="0.45"/><path d="M-16.6 285.0L19.9 254.3" stroke-opacity="0.35"/><path d="M-20.8 288.3L15.0 258.3" stroke-opacity="0.32"/><path d="M-28.1 293.9L13.7 258.9" stroke-opacity="0.43"/><path d="M-20.2 293.5L11.9 266.5" stroke-opacity="0.26"/><path d="M-12.7 288.2L13.1 266.5" stroke-opacity="0.31"/><path d="M-8.2 287.4L19.3 264.3" stroke-opacity="0.35"/><path d="M2.3 279.8L34.8 252.5" stroke-opacity="0.38"/><path d="M-0.9 283.9L30.8 257.2" stroke-opacity="0.29"/><path d="M-7.3 295.3L21.7 270.9" stroke-opacity="0.31"/><path d="M3.2 282.9L38.4 253.4" stroke-opacity="0.41"/><path d="M7.9 283.8L41.7 255.5" stroke-opacity="0.29"/><path d="M7.3 286.5L44.5 255.2" stroke-opacity="0.54"/><path d="M2.7 297.8L36.5 269.4" stroke-opacity="0.40"/><path d="M25.8 279.5L52.7 256.9" stroke-opacity="0.21"/><path d="M2.2 296.2L38.5 265.7" stroke-opacity="0.44"/><path d="M20.0 288.8L46.6 266.5" stroke-opacity="0.42"/><path d="M12.2 293.3L39.5 270.4" stroke-opacity="0.45"/><path d="M12.7 299.7L47.6 270.4" stroke-opacity="0.51"/><path d="M12.4 296.7L53.1 262.5" stroke-opacity="0.34"/><path d="M29.0 286.2L58.9 261.1" stroke-opacity="0.52"/><path d="M38.5 282.6L75.7 251.4" stroke-opacity="0.37"/><path d="M36.1 285.5L71.9 255.5" stroke-opacity="0.53"/><path d="M31.1 290.2L72.2 255.7" stroke-opacity="0.36"/><path d="M27.6 294.7L56.3 270.6" stroke-opacity="0.21"/><path d="M44.2 283.2L84.3 249.5" stroke-opacity="0.41"/><path d="M54.6 279.3L93.3 246.8" stroke-opacity="0.34"/><path d="M53.9 276.7L89.9 246.6" stroke-opacity="0.55"/><path d="M35.8 293.4L72.0 263.1" stroke-opacity="0.47"/><path d="M37.6 295.8L79.5 260.6" stroke-opacity="0.50"/><path d="M50.3 288.4L87.2 257.4" stroke-opacity="0.24"/><path d="M55.8 285.2L90.4 256.2" stroke-opacity="0.42"/><path d="M60.5 288.2L88.4 264.8" stroke-opacity="0.28"/><path d="M52.3 293.1L82.5 267.7" stroke-opacity="0.34"/><path d="M65.9 284.5L90.4 264.0" stroke-opacity="0.35"/><path d="M69.7 281.5L95.1 260.2" stroke-opacity="0.27"/><path d="M68.5 285.9L104.8 255.4" stroke-opacity="0.35"/><path d="M65.9 291.6L103.2 260.3" stroke-opacity="0.28"/><path d="M66.5 289.9L90.6 269.7" stroke-opacity="0.42"/><path d="M85.4 276.1L126.4 241.7" stroke-opacity="0.43"/><path d="M72.6 296.8L100.0 273.8" stroke-opacity="0.33"/><path d="M84.2 288.6L125.7 253.7" stroke-opacity="0.40"/><path d="M68.0 297.1L108.2 263.3" stroke-opacity="0.30"/><path d="M81.7 292.2L118.5 261.4" stroke-opacity="0.37"/><path d="M94.8 283.7L135.5 249.5" stroke-opacity="0.53"/><path d="M76.8 299.7L102.3 278.3" stroke-opacity="0.39"/><path d="M96.9 286.9L128.2 260.7" stroke-opacity="0.38"/><path d="M101.8 281.5L130.0 257.8" stroke-opacity="0.22"/><path d="M109.2 280.3L150.2 245.9" stroke-opacity="0.23"/><path d="M114.5 276.2L138.7 255.8" stroke-opacity="0.32"/><path d="M93.4 296.3L123.2 271.3" stroke-opacity="0.49"/><path d="M94.5 296.9L127.9 268.9" stroke-opacity="0.36"/><path d="M110.3 287.8L137.0 265.4" stroke-opacity="0.22"/><path d="M104.6 296.1L144.7 262.4" stroke-opacity="0.50"/><path d="M129.6 272.9L153.6 252.8" stroke-opacity="0.28"/><path d="M131.1 274.1L170.0 241.5" stroke-opacity="0.24"/><path d="M108.9 298.7L141.0 271.8" stroke-opacity="0.42"/><path d="M122.3 292.0L160.1 260.3" stroke-opacity="0.41"/><path d="M119.2 297.8L148.2 273.4" stroke-opacity="0.45"/><path d="M112.4 301.1L138.0 279.7" stroke-opacity="0.30"/><path d="M134.8 283.5L159.7 262.6" stroke-opacity="0.48"/><path d="M133.3 290.4L165.4 263.4" stroke-opacity="0.46"/><path d="M146.6 284.6L185.3 252.2" stroke-opacity="0.23"/><path d="M146.7 284.6L180.2 256.6" stroke-opacity="0.45"/><path d="M136.0 296.4L159.8 276.4" stroke-opacity="0.34"/><path d="M148.6 285.4L187.9 252.4" stroke-opacity="0.24"/><path d="M147.7 290.2L189.3 255.3" stroke-opacity="0.28"/><path d="M150.8 290.8L178.5 267.6" stroke-opacity="0.47"/><path d="M154.2 284.8L196.1 249.6" stroke-opacity="0.21"/><path d="M147.0 294.8L181.7 265.7" stroke-opacity="0.24"/><path d="M163.4 284.9L195.9 257.6" stroke-opacity="0.31"/><path d="M163.8 287.3L202.0 255.2" stroke-opacity="0.38"/><path d="M162.5 284.4L188.3 262.7" stroke-opacity="0.46"/><path d="M175.9 281.3L210.4 252.3" stroke-opacity="0.21"/><path d="M176.5 280.9L213.8 249.6" stroke-opacity="0.22"/><path d="M184.0 274.0L225.9 238.8" stroke-opacity="0.44"/><path d="M176.8 285.2L205.6 261.0" stroke-opacity="0.52"/><path d="M183.1 282.6L209.4 260.6" stroke-opacity="0.50"/><path d="M163.7 299.4L191.4 276.1" stroke-opacity="0.41"/><path d="M171.9 297.4L205.3 269.4" stroke-opacity="0.36"/><path d="M168.7 299.5L202.0 271.5" stroke-opacity="0.31"/><path d="M191.7 285.7L215.5 265.7" stroke-opacity="0.37"/><path d="M189.2 286.7L219.9 260.9" stroke-opacity="0.36"/><path d="M204.8 279.4L228.8 259.2" stroke-opacity="0.20"/><path d="M205.3 274.8L230.7 253.4" stroke-opacity="0.47"/><path d="M184.4 294.9L223.1 262.4" stroke-opacity="0.24"/><path d="M203.9 283.9L238.5 254.9" stroke-opacity="0.50"/><path d="M207.6 284.2L246.8 251.2" stroke-opacity="0.37"/><path d="M193.6 299.9L232.3 267.4" stroke-opacity="0.28"/><path d="M219.6 273.1L257.9 241.0" stroke-opacity="0.38"/><path d="M211.8 283.0L247.3 253.3" stroke-opacity="0.33"/><path d="M211.1 290.5L253.0 255.3" stroke-opacity="0.42"/><path d="M204.8 295.7L229.8 274.6" stroke-opacity="0.31"/><path d="M204.0 297.0L228.8 276.2" stroke-opacity="0.22"/><path d="M219.4 291.1L249.9 265.6" stroke-opacity="0.52"/><path d="M217.3 292.6L248.9 266.0" stroke-opacity="0.50"/><path d="M210.7 303.8L236.8 282.0" stroke-opacity="0.42"/><path d="M216.8 297.3L258.3 262.4" stroke-opacity="0.54"/><path d="M243.1 279.9L272.7 255.0" stroke-opacity="0.31"/><path d="M247.4 277.2L284.3 246.3" stroke-opacity="0.23"/><path d="M248.7 280.9L274.1 259.7" stroke-opacity="0.24"/><path d="M246.7 278.9L281.8 249.4" stroke-opacity="0.27"/><path d="M238.8 292.5L280.7 257.4" stroke-opacity="0.27"/><path d="M237.1 292.4L272.6 262.7" stroke-opacity="0.40"/><path d="M259.3 275.2L289.6 249.9" stroke-opacity="0.39"/><path d="M236.3 298.6L263.8 275.6" stroke-opacity="0.49"/><path d="M247.5 288.6L280.0 261.3" stroke-opacity="0.47"/><path d="M265.1 282.0L289.6 261.4" stroke-opacity="0.46"/><path d="M250.7 288.8L278.7 265.3" stroke-opacity="0.27"/><path d="M243.7 298.2L282.9 265.3" stroke-opacity="0.49"/><path d="M264.1 286.9L292.7 262.9" stroke-opacity="0.41"/><path d="M267.4 288.5L300.9 260.4" stroke-opacity="0.53"/><path d="M276.9 278.1L311.7 248.9" stroke-opacity="0.32"/><path d="M271.6 289.1L309.4 257.3" stroke-opacity="0.33"/><path d="M271.1 286.1L308.8 254.5" stroke-opacity="0.42"/><path d="M262.5 300.3L298.8 269.9" stroke-opacity="0.45"/></g>
<path d="M2 6.5L209 9.5M10 6.5L6 300M0 289.5L209 292" stroke="#8a8a8a" stroke-width="0.9" fill="none"/>
<circle cx="50.4" cy="59.1" r="13" fill="#f0cb3e"/>
<circle cx="52.4" cy="61.1" r="9" fill="#e9c12e" fill-opacity="0.5"/>
<path d="M46.8 29.3L46.8 37.3M64.2 47.5L67.8 41.5M65.5 60.5L72 58.9M64.3 71.9L68.7 74.5M53 79.7L54.2 84.7M38.9 83.5L42.5 77.5M25.3 64L31.3 64.4M31.6 45.5L35.2 49.1" stroke="#ecc23a" stroke-width="1.6" stroke-linecap="round" fill="none"/>
<path d="M187.5 189L188.3 268" stroke="#a2bb3c" stroke-width="2.8" fill="none" stroke-linecap="round"/>
<ellipse cx="0" cy="0" rx="31" ry="9.8" transform="translate(161.5 247.5) rotate(38)" fill="#a9c03c"/>
<path d="M140 230C158 236 174 250 186 266" stroke="#98b030" stroke-width="1.5" fill="none"/>
<ellipse cx="0" cy="0" rx="22" ry="8.5" transform="translate(202 251) rotate(-52)" fill="#a9c03c"/>
<g><ellipse cx="0" cy="-17" rx="5.6" ry="15" transform="translate(187.5 161) rotate(8)" fill="#e54c3d"/><ellipse cx="0" cy="-17" rx="5.6" ry="15" transform="translate(187.5 161) rotate(53)" fill="#e54c3d"/><ellipse cx="0" cy="-17" rx="5.6" ry="15" transform="translate(187.5 161) rotate(98)" fill="#e54c3d"/><ellipse cx="0" cy="-17" rx="5.6" ry="15" transform="translate(187.5 161) rotate(143)" fill="#e54c3d"/><ellipse cx="0" cy="-17" rx="5.6" ry="15" transform="translate(187.5 161) rotate(188)" fill="#e54c3d"/><ellipse cx="0" cy="-17" rx="5.6" ry="15" transform="translate(187.5 161) rotate(233)" fill="#e54c3d"/><ellipse cx="0" cy="-17" rx="5.6" ry="15" transform="translate(187.5 161) rotate(278)" fill="#e54c3d"/><ellipse cx="0" cy="-17" rx="5.6" ry="15" transform="translate(187.5 161) rotate(323)" fill="#e54c3d"/></g>
<circle cx="187.5" cy="161" r="4" fill="#f2b526"/>
</g>
<path d="M0.5 0.5L208.5 299.5M208.5 0.5L0.5 299.5" stroke="#79a6f3" stroke-width="0.8" fill="none"/>
<path d="M0 0.5H209M0 299.5H209M208.5 0V300" stroke="#6c9cf0" stroke-width="1" fill="none"/>
<path d="M0.8 0V300" stroke="#c4d8f8" stroke-width="1.6" fill="none"/>
</svg>
<div class="a" style="left:212.3px;top:72.6px;width:4px;height:4px;background:#fff;border:0.9px solid #7eaaf4"></div><div class="a" style="left:212.3px;top:222px;width:4px;height:4px;background:#fff;border:0.9px solid #7eaaf4"></div><div class="a" style="left:212.3px;top:372.2px;width:4px;height:4px;background:#fff;border:0.9px solid #7eaaf4"></div><div class="a" style="left:316.5px;top:72.6px;width:4px;height:4px;background:#fff;border:0.9px solid #7eaaf4"></div><div class="a" style="left:316.5px;top:372.2px;width:4px;height:4px;background:#fff;border:0.9px solid #7eaaf4"></div><div class="a" style="left:420.6px;top:72.6px;width:4px;height:4px;background:#fff;border:0.9px solid #7eaaf4"></div><div class="a" style="left:420.6px;top:222px;width:4px;height:4px;background:#fff;border:0.9px solid #7eaaf4"></div><div class="a" style="left:420.6px;top:372.2px;width:4px;height:4px;background:#fff;border:0.9px solid #7eaaf4"></div>
<!-- status bar -->
<div class="a" style="left:20px;top:401px;width:597px;height:8.5px;background:#464646"></div>
<div class="a" style="left:20px;top:401px;width:25.5px;height:8.5px;background:#454545"></div>
<div class="t" style="left:23.9px;top:403.2px;font-size:4.9px;color:#e0e0e0;font-weight:bold;letter-spacing:-0.25px">33.33%</div>
<div class="a" style="left:45.5px;top:401px;width:78px;height:8.5px;background:#4a4a4a"></div>
<div class="t" style="left:56px;top:403.2px;font-size:4.9px;color:#c8c8c8;letter-spacing:-0.08px">ファイル : 70.1M/0 bytes</div>
<div class="t" style="left:120.5px;top:403px;font-size:4.8px;color:#bbb">&#8250;</div>
<div class="a" style="left:609px;top:401px;width:8px;height:8.5px;background:#4a4a4a"></div>
<!-- timeline -->
<div class="a" style="left:20px;top:408.6px;width:597px;height:1px;background:#3c3c3c"></div>
<div class="a" style="left:20px;top:409.5px;width:597px;height:12px;background:#424242"></div>
<div class="a" style="left:20px;top:409.5px;width:35.5px;height:12px;background:#535353"></div>
<div class="t" style="left:24px;top:412.3px;font-size:5.2px;color:#e2e2e2;font-weight:bold;letter-spacing:-0.5px">タイムライン</div>
<svg class="a" style="left:609.5px;top:413.5px" width="5" height="4" viewBox="0 0 5 4"><path d="M0 0.5H5M0 2H5M0 3.5H5" stroke="#a0a0a0" stroke-width="0.9"/></svg>
<div class="a" style="left:20px;top:421.5px;width:597px;height:155.5px;background:#535353"></div>
<div class="a" style="left:20px;top:437.3px;width:597px;height:0.8px;background:#474747"></div>
<div class="a" style="left:100.3px;top:423px;width:0.7px;height:14px;background:#4a4a4a"></div>
<div class="a" style="left:133.7px;top:423px;width:0.7px;height:14px;background:#4a4a4a"></div>
<div class="a" style="left:596.8px;top:423px;width:0.7px;height:14px;background:#4a4a4a"></div>
<svg class="a" style="left:23.5px;top:427.5px" width="5" height="5" viewBox="0 0 5 5"><path d="M0.6 0.5V4.5" stroke="#9a9a9a" stroke-width="0.7"/><path d="M4.5 0.5L1.5 2.5L4.5 4.5Z" fill="#9a9a9a"/></svg>
<svg class="a" style="left:36.8px;top:427.5px" width="5" height="5" viewBox="0 0 5 5"><path d="M3.2 0.5L0.5 2.5L3.2 4.5Z" fill="#9a9a9a"/><path d="M4.3 0.8V4.2" stroke="#9a9a9a" stroke-width="0.7"/></svg>
<svg class="a" style="left:50.5px;top:427.5px" width="5" height="5" viewBox="0 0 5 5"><path d="M0.8 0.5L4.5 2.5L0.8 4.5Z" fill="#9a9a9a"/></svg>
<svg class="a" style="left:63.5px;top:427.5px" width="5" height="5" viewBox="0 0 5 5"><path d="M0.7 0.8V4.2" stroke="#9a9a9a" stroke-width="0.7"/><path d="M1.8 0.5L4.5 2.5L1.8 4.5Z" fill="#9a9a9a"/></svg>
<svg class="a" style="left:76.5px;top:427.5px" width="5" height="5" viewBox="0 0 5 5"><path d="M0.5 2.5H2L4 0.5V4.5L2 2.5" fill="#9a9a9a"/></svg>
<svg class="a" style="left:90.2px;top:427.3px" width="6" height="6" viewBox="0 0 6 6"><circle cx="2.7" cy="2.7" r="2" fill="none" stroke="#9a9a9a" stroke-width="0.8"/><path d="M5 5L5.8 5.8" stroke="#888" stroke-width="0.5"/></svg>
<svg class="a" style="left:105.5px;top:427px" width="7" height="6" viewBox="0 0 7 6"><circle cx="1.4" cy="1.4" r="1" fill="none" stroke="#a8a8a8" stroke-width="0.6"/><circle cx="1.4" cy="4.6" r="1" fill="none" stroke="#a8a8a8" stroke-width="0.6"/><path d="M2.2 2L6.5 4.8M2.2 4L6.5 1.2" stroke="#a8a8a8" stroke-width="0.6"/></svg>
<svg class="a" style="left:120.2px;top:427px" width="6" height="6" viewBox="0 0 6 6"><rect x="0.5" y="0.5" width="5" height="5" fill="none" stroke="#a8a8a8" stroke-width="0.6"/><path d="M5.5 1.5V5.5H1.5Z" fill="#a8a8a8"/></svg>
<div class="a" style="left:278px;top:498.5px;width:70.3px;height:9.2px;background:#424242"></div>
<div class="t" style="left:286.5px;top:501px;font-size:4.6px;color:#e8e8e8;font-weight:bold;letter-spacing:-0.57px">ビデオタイムラインを作成</div>
<div class="a" style="left:350.2px;top:498.5px;width:7.8px;height:9.2px;background:#424242"></div>
<svg class="a" style="left:351.8px;top:501.5px" width="5" height="3" viewBox="0 0 5 3"><path d="M0.4 0.4L2.5 2.6L4.6 0.4" fill="none" stroke="#bbb" stroke-width="0.6"/></svg>
<div class="a" style="left:20px;top:568px;width:597px;height:9px;background:#4c4c4c"></div>
<div class="a" style="left:20px;top:568px;width:113px;height:9px;background:#515151;border-top:0.6px solid #494949"></div>
<div class="a" style="left:133px;top:568px;width:70px;height:9px;background:#535353;border-top:0.6px solid #494949"></div>
<div class="a" style="left:203px;top:569px;width:406.7px;height:8px;background:#474747"></div>
<div class="t" style="left:22.5px;top:571px;font-size:3.8px;color:#8a8a8a;letter-spacing:-0.3px">&#9723;&#9723;&#9723;</div>
<svg class="a" style="left:35.5px;top:570px" width="6" height="5" viewBox="0 0 6 5"><path d="M0.5 4.5Q1 1.8 4 1.8" fill="none" stroke="#c0c0c0" stroke-width="0.8"/><path d="M3.5 0.3L5.8 1.8L3.5 3.3Z" fill="#c0c0c0"/></svg>
<svg class="a" style="left:137.5px;top:571.3px" width="5" height="3" viewBox="0 0 5 3"><path d="M0.3 2.7L2 0.8L2.8 1.5L3.3 1L4.7 2.7Z" fill="#b0b0b0"/></svg>
<div class="a" style="left:150.8px;top:570.9px;width:34px;height:0.8px;background:#9a9a9a"></div>
<svg class="a" style="left:192px;top:570.3px" width="8" height="4" viewBox="0 0 8 4"><path d="M0.3 3.7L3 0.8L4.3 2L5 1.3L7.7 3.7Z" fill="#c0c0c0"/></svg>
<!-- separators -->
<div class="a" style="left:617px;top:27px;width:1.2px;height:551px;background:#404040"></div>
<!-- history -->
<div class="a" style="left:618px;top:27px;width:107px;height:551px;background:#4c4c4c"></div>
<div class="a" style="left:618px;top:27px;width:108px;height:6px;background:#3c3c3c"></div>
<svg class="a" style="left:719.5px;top:28.8px" width="4" height="3" viewBox="0 0 4 3"><path d="M1.8 0.2L0.2 1.5L1.8 2.8ZM3.8 0.2L2.2 1.5L3.8 2.8Z" fill="#9a9a9a"/></svg>
<div class="a" style="left:618px;top:33px;width:107px;height:11.5px;background:#424242"></div>
<div class="a" style="left:618px;top:33px;width:31px;height:11.5px;background:#535353"></div>
<div class="t" style="left:621.7px;top:35.5px;font-size:5.2px;color:#e2e2e2;font-weight:bold;letter-spacing:-0.2px">ヒストリー</div>
<svg class="a" style="left:718.3px;top:36.5px" width="5" height="4" viewBox="0 0 5 4"><path d="M0 0.5H5M0 2H5M0 3.5H5" stroke="#a8a8a8" stroke-width="0.9"/></svg>
<div class="a" style="left:618px;top:46.3px;width:100.4px;height:13.5px;background:#535353;border-bottom:0.7px solid #474747"></div>
<svg class="a" style="left:619.5px;top:50px" width="6" height="6" viewBox="0 0 6 6"><path d="M1 5.5L5.5 1" stroke="#ddd" stroke-width="1"/><path d="M0.5 2.2L1.8 1.2M0.8 3.5L2.8 1.8" stroke="#ddd" stroke-width="0.6"/></svg>
<div class="a" style="left:628.8px;top:47.9px;width:13.2px;height:10.1px;background:#fff;box-shadow:0 0 0 0.5px #3a3a3a"></div>
<div class="t" style="left:644.2px;top:50.6px;font-size:4.6px;color:#c8c8c8;font-weight:bold;letter-spacing:-0.55px">サンプル</div>
<div class="a" style="left:618px;top:59.8px;width:100.4px;height:11.4px;background:#535353"></div>
<div class="a" style="left:620.5px;top:62.5px;width:5px;height:5px;border:0.6px solid #4a4a4a"></div>
<svg class="a" style="left:631px;top:61.5px" width="6" height="7" viewBox="0 0 6 7"><path d="M0.5 0.5H4L5.5 2V6.5H0.5Z" fill="#9a9a9a"/><path d="M1.3 3H4.7M1.3 4.2H4.7M1.3 5.4H4.7" stroke="#777" stroke-width="0.5"/></svg>
<div class="t" style="left:642.5px;top:63px;font-size:4.8px;color:#c8c8c8;font-weight:bold">新規</div>
<div class="a" style="left:618px;top:71.2px;width:100.4px;height:9.7px;background:#606060"></div>
<div class="a" style="left:620.5px;top:73.5px;width:5px;height:5px;border:0.6px solid #575757"></div>
<svg class="a" style="left:631px;top:72.5px" width="6" height="7" viewBox="0 0 6 7"><path d="M0.5 0.5H4L5.5 2V6.5H0.5Z" fill="#a6a6a6"/><path d="M1.3 3H4.7M1.3 4.2H4.7M1.3 5.4H4.7" stroke="#808080" stroke-width="0.5"/></svg>
<div class="t" style="left:642.5px;top:73.6px;font-size:4.8px;color:#d8d8d8;font-weight:bold;letter-spacing:-0.75px">新規レイヤー</div>
<div class="a" style="left:718px;top:46.5px;width:7px;height:519.5px;background:#4a4a4a"></div><div class="a" style="left:618px;top:44.8px;width:107px;height:1.5px;background:#515151"></div>
<div class="a" style="left:618px;top:566px;width:107px;height:11px;background:#535353;border-top:0.8px solid #464646"></div>
<svg class="a" style="left:680.5px;top:568.5px" width="7" height="7" viewBox="0 0 7 7"><path d="M2.5 1H5L6.5 2.5V6.5H2.5Z" fill="#c8c8c8"/><path d="M0.5 4.5H3.5M2 3V6" stroke="#535353" stroke-width="1.6"/><path d="M0.5 4.5H3.5M2 3V6" stroke="#c8c8c8" stroke-width="0.8"/></svg>
<svg class="a" style="left:694.5px;top:569px" width="7" height="6" viewBox="0 0 7 6"><path d="M0.5 1.5H2L2.7 0.7H4.3L5 1.5H6.5V5.5H0.5Z" fill="#c8c8c8"/><circle cx="3.5" cy="3.4" r="1.2" fill="#535353"/></svg>
<svg class="a" style="left:707.5px;top:568.5px" width="6" height="7" viewBox="0 0 6 7"><path d="M0.5 1.3H5.5M2 1.3V0.5H4V1.3" stroke="#b0b0b0" stroke-width="0.7" fill="none"/><path d="M1 2H5L4.6 6.6H1.4Z" fill="#a8a8a8"/></svg>
<div class="a" style="left:617px;top:27px;width:1.2px;height:551px;background:#404040"></div>
<div class="a" style="left:725px;top:27px;width:1.3px;height:551px;background:#404040"></div>
<!-- right panels -->
<div class="a" style="left:726px;top:27px;width:136px;height:551px;background:#535353"></div>
<div class="a" style="left:726px;top:27px;width:137px;height:6.5px;background:#3c3c3c"></div>
<svg class="a" style="left:856.5px;top:28.8px" width="4" height="3" viewBox="0 0 4 3"><path d="M0.2 0.2L1.8 1.5L0.2 2.8ZM2.2 0.2L3.8 1.5L2.2 2.8Z" fill="#9a9a9a"/></svg>
<!-- color panel -->
<div class="a" style="left:726px;top:33.5px;width:136px;height:11.5px;background:#424242"></div>
<div class="a" style="left:726.7px;top:33.5px;width:21.7px;height:11.5px;background:#535353"></div>
<div class="t" style="left:730.5px;top:36px;font-size:5.2px;color:#e2e2e2;font-weight:bold;letter-spacing:-0.2px">カラー</div>
<div class="a" style="left:780.5px;top:33.5px;width:0.8px;height:11.5px;background:#3a3a3a"></div>
<div class="t" style="left:752px;top:36px;font-size:5.2px;color:#a8a8a8;font-weight:bold;letter-spacing:-0.35px">スウォッチ</div>
<svg class="a" style="left:855.5px;top:36.8px" width="5" height="4" viewBox="0 0 5 4"><path d="M0 0.5H5M0 2H5M0 3.5H5" stroke="#a0a0a0" stroke-width="0.9"/></svg>
<div class="a" style="left:735px;top:53px;width:8px;height:8.5px;background:#fff"></div>
<div class="a" style="left:731px;top:49.2px;width:8px;height:8px;background:#262626;border:0.8px solid #8c8c8c"></div>
<div class="a" style="left:746.2px;top:47.6px;width:94px;height:106.2px;background:linear-gradient(to bottom,rgba(0,0,0,0) 0%,rgba(0,0,0,0.45) 50%,#000 100%),linear-gradient(to right,#fff,#3a8df2)"></div>
<div class="a" style="left:744.5px;top:132.7px;width:4.6px;height:4.6px;border:0.7px solid #ddd;border-radius:50%"></div>
<div class="a" style="left:847.1px;top:47.6px;width:8.3px;height:106.2px;background:linear-gradient(to bottom,#f22d26 0%,#ea35d8 16%,#6f2cf0 26%,#0f1cf2 33%,#2f8cf2 42%,#3fe0f2 50%,#4ee85a 66%,#d8ea3a 80%,#f5a229 88%,#f22d26 100%)"></div>
<svg class="a" style="left:842.5px;top:89px" width="4" height="4" viewBox="0 0 4 4"><path d="M0.3 0.3L3.7 2L0.3 3.7Z" fill="#e8e8e8"/></svg>
<div class="a" style="left:726px;top:161.8px;width:136px;height:0.6px;background:#474747"></div>
<!-- properties -->
<div class="a" style="left:726px;top:162px;width:136px;height:12.8px;background:#424242"></div>
<div class="a" style="left:726.7px;top:162px;width:31.5px;height:12.8px;background:#535353"></div>
<div class="t" style="left:730.5px;top:165.3px;font-size:5.2px;color:#e2e2e2;font-weight:bold;letter-spacing:-0.25px">プロパティ</div>
<div class="a" style="left:784.2px;top:162px;width:0.8px;height:12.8px;background:#3a3a3a"></div>
<div class="t" style="left:761.5px;top:165.3px;font-size:5.2px;color:#a8a8a8;font-weight:bold;letter-spacing:-0.2px">色調補正</div>
<svg class="a" style="left:855.5px;top:167px" width="5" height="4" viewBox="0 0 5 4"><path d="M0 0.5H5M0 2H5M0 3.5H5" stroke="#a0a0a0" stroke-width="0.9"/></svg>
<div class="t" style="left:730px;top:180.8px;font-size:4.8px;color:#d8d8d8;font-weight:bold;letter-spacing:-0.7px">属性なし</div>
<div class="a" style="left:726px;top:189px;width:136px;height:0.7px;background:#484848"></div>
<div class="a" style="left:856px;top:190px;width:6px;height:119px;background:#4b4b4b"></div>
<div class="a" style="left:726px;top:319.8px;width:136px;height:2px;background:#3c3c3c"></div>
<!-- layers -->
<div class="a" style="left:726px;top:321.8px;width:136px;height:12px;background:#424242"></div>
<div class="a" style="left:726.7px;top:321.8px;width:26px;height:12px;background:#535353"></div>
<div class="t" style="left:730.5px;top:324.8px;font-size:5.2px;color:#e2e2e2;font-weight:bold;letter-spacing:-0.25px">レイヤー</div>
<div class="t" style="left:757.5px;top:324.8px;font-size:5.2px;color:#a8a8a8;font-weight:bold;letter-spacing:-0.3px">チャンネル</div>
<div class="a" style="left:784.4px;top:321.8px;width:0.8px;height:12px;background:#3a3a3a"></div>
<div class="t" style="left:789px;top:324.8px;font-size:5.2px;color:#a8a8a8;font-weight:bold;letter-spacing:-0.2px">パス</div>
<div class="a" style="left:802px;top:321.8px;width:0.8px;height:12px;background:#3a3a3a"></div>
<svg class="a" style="left:855.5px;top:326px" width="5" height="4" viewBox="0 0 5 4"><path d="M0 0.5H5M0 2H5M0 3.5H5" stroke="#a0a0a0" stroke-width="0.9"/></svg>
<div class="a" style="left:728.8px;top:337.9px;width:52.7px;height:7.5px;background:#4d4d4d;border:0.6px solid #474747;border-radius:1px"></div>
<svg class="a" style="left:731px;top:339.3px" width="5" height="5" viewBox="0 0 5 5"><circle cx="2" cy="2" r="1.5" stroke="#8a8a8a" stroke-width="0.6" fill="none"/><path d="M3 3L4.6 4.6" stroke="#8a8a8a" stroke-width="0.6"/></svg>
<div class="t" style="left:737.5px;top:339.6px;font-size:4.3px;color:#7a7a7a">種類</div>
<div class="t" style="left:778px;top:339.6px;font-size:4px;color:#777">&#8964;</div>
<svg class="a" style="left:788.5px;top:339px" width="7" height="6" viewBox="0 0 7 6"><rect x="0.5" y="0.5" width="6" height="5" fill="none" stroke="#9a9a9a" stroke-width="0.6"/><path d="M1 5L3 3L4.5 4.2L6 3" fill="none" stroke="#9a9a9a" stroke-width="0.5"/></svg>
<svg class="a" style="left:799.5px;top:339px" width="6" height="6" viewBox="0 0 6 6"><circle cx="3" cy="3" r="2.4" fill="none" stroke="#9a9a9a" stroke-width="0.6"/><path d="M3 0.6A2.4 2.4 0 0 1 3 5.4Z" fill="#9a9a9a"/></svg>
<svg class="a" style="left:809.5px;top:339px" width="6" height="6" viewBox="0 0 6 6"><path d="M0.5 0.8H5.5M3 0.8V5.5M2 5.5H4" stroke="#9a9a9a" stroke-width="0.8" fill="none"/></svg>
<svg class="a" style="left:820px;top:339px" width="6" height="6" viewBox="0 0 6 6"><rect x="1" y="1" width="4" height="4" fill="none" stroke="#9a9a9a" stroke-width="0.6"/><path d="M0.3 1H1.7M4.3 1H5.7M0.3 5H1.7M4.3 5H5.7" stroke="#9a9a9a" stroke-width="0.8"/></svg>
<svg class="a" style="left:830.5px;top:339px" width="6" height="6" viewBox="0 0 6 6"><path d="M1 0.5H4L5 1.5V5.5H1Z" fill="none" stroke="#9a9a9a" stroke-width="0.6"/><rect x="0.5" y="3.3" width="2.5" height="2.2" fill="#9a9a9a"/></svg>
<div class="a" style="left:843.3px;top:336.8px;width:3.5px;height:3.5px;border-radius:50%;background:#a8a8a8"></div>
<div class="a" style="left:843.8px;top:340.5px;width:2.5px;height:4px;background:#3a3a3a"></div>
<div class="a" style="left:726px;top:348px;width:136px;height:0.6px;background:#4a4a4a"></div>
<div class="a" style="left:728.2px;top:350.5px;width:71.8px;height:7.5px;background:#424242;border:0.6px solid #3c3c3c"></div>
<div class="t" style="left:731px;top:352px;font-size:4.5px;color:#d8d8d8;font-weight:bold">通常</div>
<div class="t" style="left:796px;top:352px;font-size:4px;color:#aaa">&#8964;</div>
<div class="t" style="left:802px;top:352px;font-size:4.5px;color:#c8c8c8;font-weight:bold;letter-spacing:-0.2px">不透明度 :</div>
<div class="a" style="left:824px;top:350.5px;width:16.5px;height:7.5px;background:#404040"></div>
<div class="t" style="left:824.8px;top:352.2px;font-size:4.6px;color:#e8e8e8;font-weight:bold;letter-spacing:-0.15px">100%</div>
<div class="a" style="left:841.5px;top:350.5px;width:5px;height:7.5px;background:#404040"></div>
<div class="t" style="left:842.4px;top:352.2px;font-size:4px;color:#bbb">&#8964;</div>
<div class="a" style="left:726px;top:361px;width:136px;height:0.6px;background:#4a4a4a"></div>
<div class="t" style="left:729px;top:365px;font-size:4.5px;color:#7c7c7c;letter-spacing:-0.1px">ロック :</div>
<svg class="a" style="left:746.5px;top:364.5px" width="5" height="5" viewBox="0 0 5 5"><rect x="0.3" y="0.3" width="4.4" height="4.4" fill="none" stroke="#8a8a8a" stroke-width="0.5"/><path d="M0.3 0.3H2.5V2.5H4.7V4.7H2.5V2.5H0.3Z" fill="#8a8a8a"/></svg>
<svg class="a" style="left:756.5px;top:364.3px" width="5" height="6" viewBox="0 0 5 6"><path d="M4.5 0.5L1 5" stroke="#9a9a9a" stroke-width="0.9"/></svg>
<svg class="a" style="left:766px;top:364px" width="6" height="6" viewBox="0 0 6 6"><path d="M3 0.3V5.7M0.3 3H5.7" stroke="#9a9a9a" stroke-width="0.6"/><path d="M3 0L2.2 1H3.8ZM3 6L2.2 5H3.8ZM0 3L1 2.2V3.8ZM6 3L5 2.2V3.8Z" fill="#9a9a9a"/></svg>
<svg class="a" style="left:775.5px;top:364.2px" width="6" height="6" viewBox="0 0 6 6"><path d="M1 0.5V5.5M0.5 1H3M0.5 5H3M5 0.5V5.5M3 3H5" stroke="#8a8a8a" stroke-width="0.6" fill="none"/></svg>
<svg class="a" style="left:785.5px;top:364px" width="5" height="6" viewBox="0 0 5 6"><path d="M1.2 2.6V1.6A1.3 1.3 0 0 1 3.8 1.6V2.6" fill="none" stroke="#9a9a9a" stroke-width="0.6"/><rect x="0.6" y="2.6" width="3.8" height="3" fill="#9a9a9a"/></svg>
<div class="t" style="left:810.5px;top:365px;font-size:4.5px;color:#c8c8c8;font-weight:bold">塗り :</div>
<div class="a" style="left:824px;top:363.5px;width:16.5px;height:7.5px;background:#404040"></div>
<div class="t" style="left:824.8px;top:365.2px;font-size:4.6px;color:#e8e8e8;font-weight:bold;letter-spacing:-0.15px">100%</div>
<div class="a" style="left:841.5px;top:363.5px;width:5px;height:7.5px;background:#404040"></div>
<div class="t" style="left:842.4px;top:365.2px;font-size:4px;color:#bbb">&#8964;</div>
<div class="a" style="left:726px;top:373.5px;width:136px;height:0.6px;background:#4a4a4a"></div>
<div class="a" style="left:739.5px;top:374px;width:116.5px;height:13.8px;background:#656565"></div>
<div class="a" style="left:726px;top:387.8px;width:130px;height:14px;background:#535353;border-bottom:0.6px solid #4a4a4a"></div>
<div class="a" style="left:739px;top:387.8px;width:0.6px;height:14px;background:#4a4a4a"></div>
<svg class="a" style="left:730.3px;top:379px" width="6" height="5" viewBox="0 0 6 5"><path d="M0.3 2.5Q3 -0.5 5.7 2.5Q3 5.5 0.3 2.5Z" fill="#ddd"/><circle cx="3" cy="2.5" r="1" fill="#535353"/></svg>
<svg class="a" style="left:730.3px;top:393px" width="6" height="5" viewBox="0 0 6 5"><path d="M0.3 2.5Q3 -0.5 5.7 2.5Q3 5.5 0.3 2.5Z" fill="#ddd"/><circle cx="3" cy="2.5" r="1" fill="#535353"/></svg>
<div class="a" style="left:740.5px;top:375px;width:15.5px;height:12px;background:#f2f2f2;border:0.6px solid #999"></div>
<div class="a" style="left:742px;top:376.5px;width:12.5px;height:2.5px;background:#cfe0ef"></div>
<div class="a" style="left:742px;top:383.5px;width:12.5px;height:2.5px;background:#c8dfc3"></div>
<div class="a" style="left:751.5px;top:379.8px;width:1.5px;height:1.5px;background:#e24a3a"></div>
<div class="a" style="left:740.2px;top:374.4px;width:2px;height:2px;background:#333"></div>
<div class="a" style="left:754.6px;top:374.4px;width:2px;height:2px;background:#333"></div>
<div class="a" style="left:740.2px;top:386.2px;width:2px;height:2px;background:#333"></div>
<div class="a" style="left:754.6px;top:386.2px;width:2px;height:2px;background:#333"></div>
<div class="t" style="left:758.5px;top:378.6px;font-size:4.8px;color:#e8e8e8;font-weight:bold;letter-spacing:-0.2px">イラスト1</div>
<div class="a" style="left:741.5px;top:389.8px;width:13.5px;height:11px;background:#fff"></div>
<div class="t" style="left:758.5px;top:392.6px;font-size:4.8px;color:#e0e0e0;font-weight:bold">背景</div>
<svg class="a" style="left:843.5px;top:392px" width="5" height="6" viewBox="0 0 5 6"><path d="M1.2 2.6V1.6A1.3 1.3 0 0 1 3.8 1.6V2.6" fill="none" stroke="#c8c8c8" stroke-width="0.6"/><rect x="0.6" y="2.6" width="3.8" height="3" fill="none" stroke="#c8c8c8" stroke-width="0.6"/></svg>
<div class="a" style="left:856px;top:374px;width:6px;height:192px;background:#4b4b4b"></div>
<div class="a" style="left:726px;top:566px;width:136px;height:11px;background:#535353;border-top:0.8px solid #464646"></div>
<div class="t" style="left:775.5px;top:569.5px;font-size:5px;color:#8a8a8a;font-weight:bold">&#9675;&#9675;</div>
<div class="t" style="left:787px;top:569px;font-size:5.5px;color:#9a9a9a;font-style:italic;font-family:'Liberation Serif',serif">fx</div>
<div class="a" style="left:798px;top:569.5px;width:6px;height:5px;background:#b8b8b8;border-radius:0.5px"></div>
<div class="a" style="left:799.8px;top:570.8px;width:2.4px;height:2.4px;background:#535353;border-radius:50%"></div>
<svg class="a" style="left:810px;top:569px" width="6" height="6" viewBox="0 0 6 6"><circle cx="3" cy="3" r="2.4" fill="none" stroke="#b8b8b8" stroke-width="0.7"/><path d="M3 0.6A2.4 2.4 0 0 1 3 5.4Z" fill="#b8b8b8"/></svg>
<svg class="a" style="left:821.5px;top:569.3px" width="7" height="6" viewBox="0 0 7 6"><path d="M0.5 1H3L3.6 1.8H6.5V5.5H0.5Z" fill="#b8b8b8"/></svg>
<svg class="a" style="left:833px;top:569px" width="6" height="6" viewBox="0 0 6 6"><rect x="0.5" y="0.5" width="5" height="5" fill="none" stroke="#b8b8b8" stroke-width="0.7"/><path d="M3 1.7V4.3M1.7 3H4.3" stroke="#b8b8b8" stroke-width="0.7"/></svg>
<svg class="a" style="left:844.5px;top:568.5px" width="6" height="7" viewBox="0 0 6 7"><path d="M0.5 1.3H5.5M2 1.3V0.5H4V1.3" stroke="#9a9a9a" stroke-width="0.7" fill="none"/><path d="M1 2H5L4.6 6.6H1.4Z" fill="none" stroke="#9a9a9a" stroke-width="0.7"/></svg>
<div class="a" style="left:862px;top:27px;width:1.3px;height:551px;background:#404040"></div>
<!-- CC libraries -->
<div class="a" style="left:863px;top:27px;width:159px;height:551px;background:#535353"></div>
<div class="a" style="left:863px;top:27px;width:159px;height:6.5px;background:#3c3c3c"></div>
<svg class="a" style="left:1016.5px;top:28.8px" width="4" height="3" viewBox="0 0 4 3"><path d="M0.2 0.2L1.8 1.5L0.2 2.8ZM2.2 0.2L3.8 1.5L2.2 2.8Z" fill="#9a9a9a"/></svg>
<div class="a" style="left:863px;top:33.5px;width:159px;height:11.5px;background:#424242"></div>
<div class="a" style="left:863.5px;top:33.5px;width:39.5px;height:11.5px;background:#535353"></div>
<div class="t" style="left:867px;top:36px;font-size:5.2px;color:#e2e2e2;font-weight:bold;letter-spacing:-0.2px">CC ライブラリ</div>
<svg class="a" style="left:1015.5px;top:36.8px" width="5" height="4" viewBox="0 0 5 4"><path d="M0 0.5H5M0 2H5M0 3.5H5" stroke="#a0a0a0" stroke-width="0.9"/></svg>
<svg class="a" style="left:868.8px;top:54.5px" width="5" height="5" viewBox="0 0 5 5"><circle cx="2" cy="2" r="1.5" stroke="#e0e0e0" stroke-width="0.8" fill="none"/><path d="M3 3L4.6 4.6" stroke="#e0e0e0" stroke-width="0.8"/></svg>
<div class="t" style="left:877.5px;top:54.8px;font-size:4.8px;color:#737373;letter-spacing:-0.3px">すべてのライブラリを検索</div>
<div class="a" style="left:863px;top:64.5px;width:159px;height:0.6px;background:#4a4a4a"></div>
<svg class="a" style="left:867.3px;top:72px" width="6" height="6" viewBox="0 0 6 6"><path d="M3 0.3V5.7M0.3 3H5.7" stroke="#e8e8e8" stroke-width="0.9"/></svg>
<div class="t" style="left:875px;top:72.6px;font-size:4.8px;color:#e0e0e0;font-weight:bold;letter-spacing:-0.2px">新規ライブラリを作成</div>
<div class="a" style="left:869px;top:83.8px;width:141.2px;height:14px;background:#474747;border-radius:1px"></div>
<div class="t" style="left:873px;top:88.8px;font-size:4.8px;color:#d8d8d8;font-weight:bold;letter-spacing:-0.2px">マイライブラリ</div>
<svg class="a" style="left:920px;top:111px" width="40" height="34" viewBox="0 0 40 34"><g fill="none" stroke="#909090" stroke-width="0.95"><path d="M1.5 7.4H11M6.5 2.5V12"/><circle cx="22.6" cy="7.4" r="4.2"/><path d="M11 7.4H18.4M26.8 7.4H32V19"/><path d="M6 12V15.5M6 25.8H25"/><path d="M2.3 17V16H9.7V17M6 16V24.5M4.5 24.5H7.5"/><rect x="19" y="18" width="18" height="7.2" rx="3.6"/><path d="M29 20L37.5 28.5L33.5 28.6L30.8 32.5Z" fill="#535353"/></g></svg>
<div class="t" style="left:874px;top:151.3px;font-size:4.5px;color:#8e8e8e;letter-spacing:-0.31px">用意されたライブラリからヒントを得て、スピードアップを実</div>
<div class="t" style="left:923.5px;top:158.3px;font-size:4.5px;color:#8e8e8e;letter-spacing:-0.55px">現しましょう。</div>
<div class="a" style="left:910.5px;top:169px;width:58.5px;height:9.5px;background:#1e74e4;border-radius:4.8px"></div>
<div class="t" style="left:916px;top:170.8px;font-size:5.8px;color:#fff;font-weight:bold;letter-spacing:0.1px">ライブラリを検索</div>
<div class="a" style="left:1016px;top:84px;width:6.5px;height:482px;background:#4e4e4e"></div>
<div class="a" style="left:863px;top:566px;width:159px;height:11px;background:#535353;border-top:0.8px solid #464646"></div>
<svg class="a" style="left:870.5px;top:569.5px" width="8" height="5" viewBox="0 0 8 5"><path d="M1.5 4.8H6.5A1.5 1.5 0 0 0 6.5 1.8A2.2 2.2 0 0 0 2.3 1.8A1.5 1.5 0 0 0 1.5 4.8Z" fill="#e0e0e0"/></svg>
<svg class="a" style="left:1011px;top:569px" width="7" height="7" viewBox="0 0 7 7"><path d="M3 0.5V5.5M0.5 3H5.5" stroke="#c8c8c8" stroke-width="0.9"/><path d="M5 5.2L6.3 6.5" stroke="#c8c8c8" stroke-width="0.5"/></svg>
<div class="a" style="left:1022px;top:466px;width:2px;height:112px;background:#151515"></div>
<div class="a" style="left:2px;top:576.6px;width:1020px;height:1.4px;background:#575757"></div>
</body></html>
